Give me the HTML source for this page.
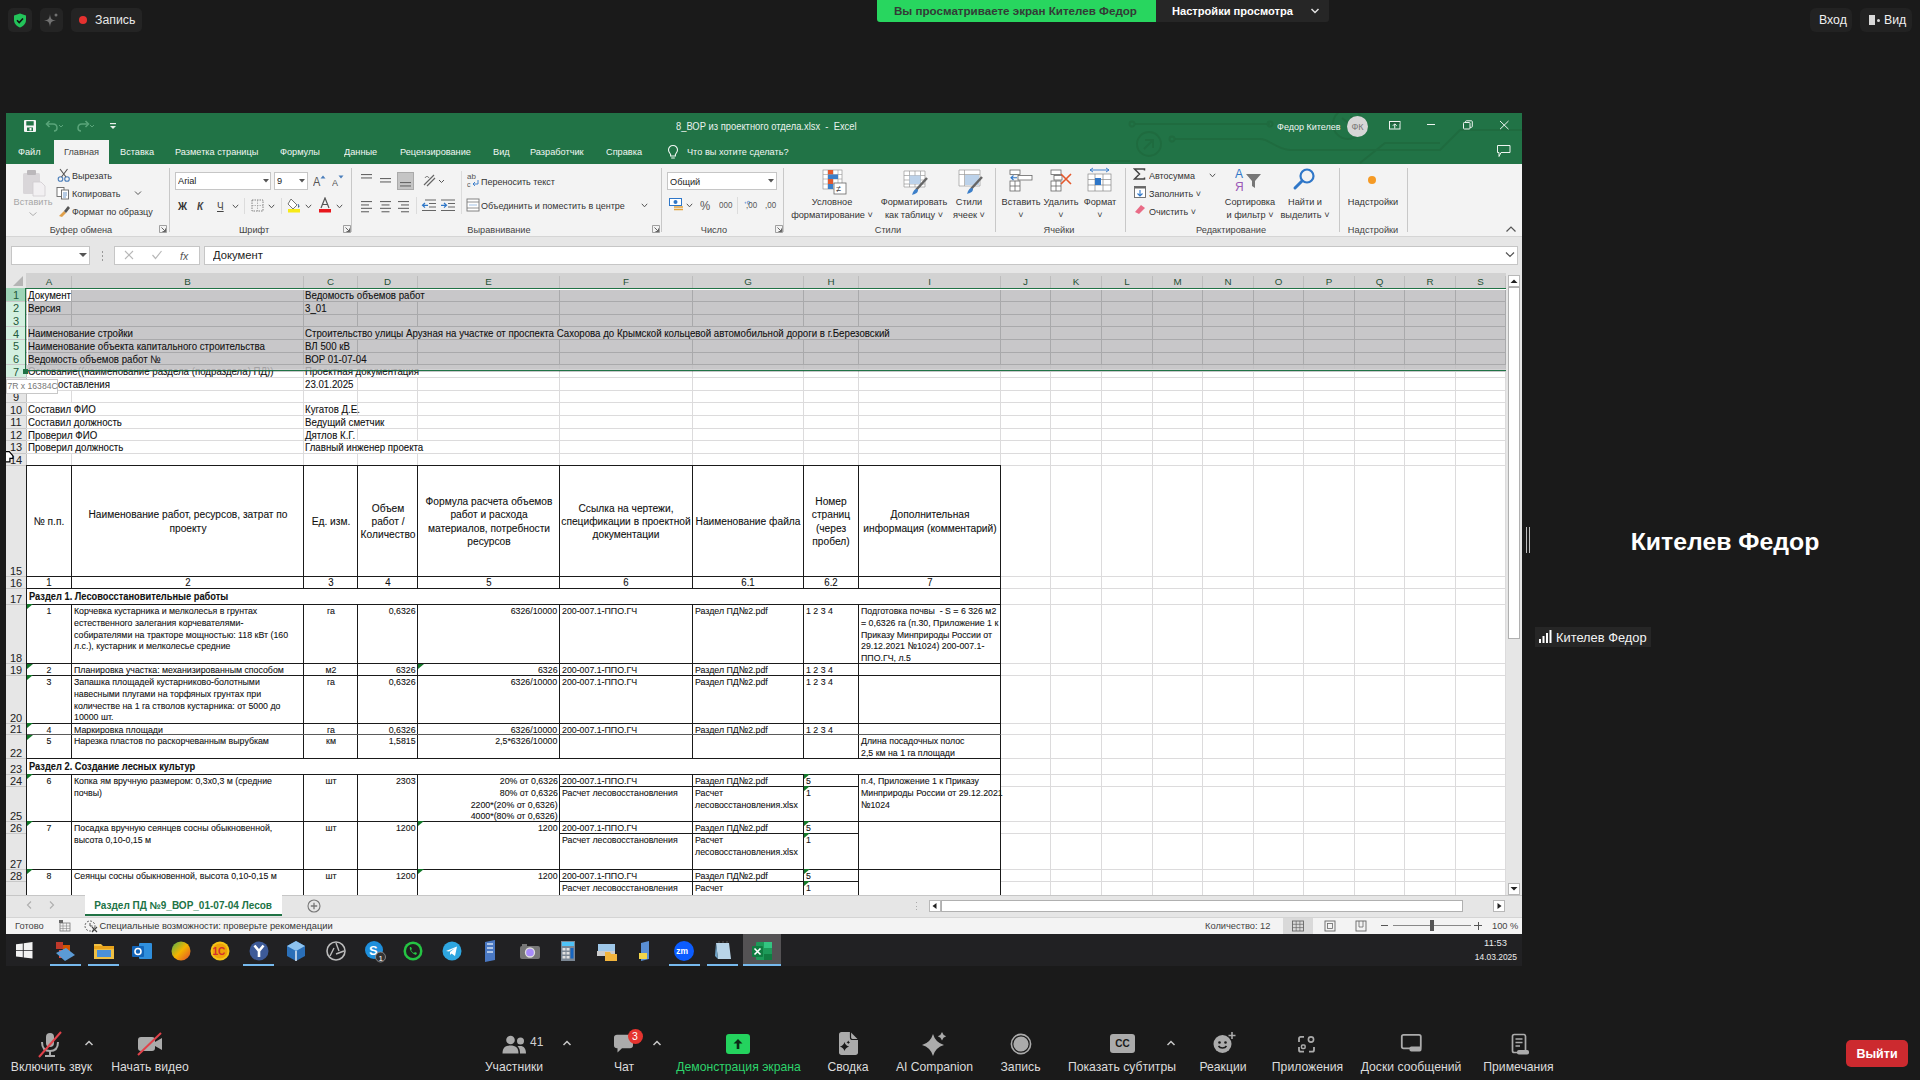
<!DOCTYPE html><html><head><meta charset="utf-8"><title>Zoom - Excel</title><style>
html,body{margin:0;padding:0;}
body{width:1920px;height:1080px;overflow:hidden;position:relative;background:#1a1a1a;font-family:"Liberation Sans",sans-serif;}
.a{position:absolute;}
.t{position:absolute;white-space:pre;font-family:"Liberation Sans",sans-serif;}
</style></head><body>
<div class="a" style="left:8.00px;top:8.00px;width:24.00px;height:24.00px;background:#242424;border-radius:5px;"></div>
<svg class="a" style="left:13px;top:13px;" width="14" height="15" viewBox="0 0 14 15"><path d="M7 0.5 L13 2.5 V7 C13 10.5 10.5 13 7 14.5 C3.5 13 1 10.5 1 7 V2.5 Z" fill="#23c45a"/><path d="M4 7.3 L6.2 9.5 L10 5.5" stroke="#111" stroke-width="1.6" fill="none"/></svg>
<div class="a" style="left:40.00px;top:8.00px;width:23.00px;height:24.00px;background:#242424;border-radius:5px;"></div>
<svg class="a" style="left:43px;top:12px;" width="16" height="16" viewBox="0 0 16 16"><path d="M7 2 C7.6 7 8.5 8 13 8.5 C8.5 9 7.6 10 7 15 C6.4 10 5.5 9 1 8.5 C5.5 8 6.4 7 7 2Z" fill="#707070"/><circle cx="13" cy="3" r="1.5" fill="#707070"/></svg>
<div class="a" style="left:71.00px;top:8.00px;width:71.00px;height:24.00px;background:#242424;border-radius:5px;"></div>
<div class="a" style="left:79.00px;top:16.00px;width:8.00px;height:8.00px;background:#e5312f;border-radius:50%;"></div>
<div class="t" style="top:12.50px;font-size:12.3px;line-height:15px;color:#e8e8e8;left:95.00px;">Запись</div>
<div class="a" style="left:877.00px;top:0.00px;width:280.00px;height:22.00px;background:#28d65f;border-radius:0 0 0 3px;"></div>
<div class="a" style="left:1156.00px;top:0.00px;width:173.00px;height:22.00px;background:#262626;border-radius:0 0 3px 0;"></div>
<div class="t" style="top:3.60px;font-size:11.6px;line-height:14px;color:#333b36;font-weight:bold;left:894.00px;">Вы просматриваете экран Кителев Федор</div>
<div class="t" style="top:4.00px;font-size:11.1px;line-height:14px;color:#ffffff;font-weight:bold;left:1172.00px;">Настройки просмотра</div>
<svg class="a" style="left:1310px;top:7px;" width="10" height="8" viewBox="0 0 10 8"><path d="M1.5 2 L5 5.5 L8.5 2" stroke="#e0e0e0" stroke-width="1.5" fill="none"/></svg>
<div class="a" style="left:1810.00px;top:8.00px;width:42.00px;height:24.00px;background:#222222;border-radius:6px;"></div>
<div class="t" style="top:12.50px;font-size:12.3px;line-height:15px;color:#f0f0f0;left:1819.00px;">Вход</div>
<div class="a" style="left:1860.00px;top:8.00px;width:52.00px;height:24.00px;background:#222222;border-radius:6px;"></div>
<div class="a" style="left:1869.00px;top:15.00px;width:6.00px;height:10.00px;background:#d8d8d8;"></div>
<div class="a" style="left:1877.00px;top:19.00px;width:3.00px;height:3.00px;background:#d8d8d8;border-radius:50%;"></div>
<div class="t" style="top:12.50px;font-size:12.3px;line-height:15px;color:#f0f0f0;left:1884.00px;">Вид</div>
<div class="a" style="left:1526.00px;top:527.00px;width:1.00px;height:26.00px;background:#bdbdbd;"></div>
<div class="a" style="left:1529.00px;top:527.00px;width:1.00px;height:26.00px;background:#bdbdbd;"></div>
<div class="t" style="top:525.50px;font-size:24.8px;line-height:31px;color:#ffffff;font-weight:bold;left:1525.00px;width:400px;text-align:center;">Кителев Федор</div>
<div class="a" style="left:1535.00px;top:627.00px;width:116.00px;height:20.00px;background:#262626;"></div>
<svg class="a" style="left:1538px;top:630px;" width="14" height="13" viewBox="0 0 14 13"><rect x="1" y="9" width="2" height="4" fill="#fff"/><rect x="4.5" y="6" width="2" height="7" fill="#fff"/><rect x="8" y="3" width="2" height="10" fill="#fff"/><rect x="11.5" y="0" width="2" height="13" fill="#fff"/></svg>
<div class="t" style="top:629.50px;font-size:12.85px;line-height:16px;color:#f4f4f4;left:1556.00px;">Кителев Федор</div>
<svg class="a" style="left:36px;top:1030px;" width="28" height="28" viewBox="0 0 28 28"><rect x="10" y="3" width="8" height="14" rx="4" fill="#ababab"/><path d="M6 12 C6 18 9 21 14 21 C19 21 22 18 22 12" stroke="#ababab" stroke-width="2" fill="none"/><rect x="13" y="21" width="2" height="4" fill="#ababab"/><rect x="9" y="25" width="10" height="2" fill="#ababab"/><path d="M3 27 L25 2" stroke="#e0424a" stroke-width="2"/></svg>
<svg class="a" style="left:84px;top:1039px;" width="10" height="8" viewBox="0 0 10 8"><path d="M1.5 6 L5 2.5 L8.5 6" stroke="#c8c8c8" stroke-width="1.5" fill="none"/></svg>
<div class="t" style="top:1059.80px;font-size:12.2px;line-height:15px;color:#dcdcdc;left:-48.50px;width:200px;text-align:center;">Включить звук</div>
<svg class="a" style="left:136px;top:1032px;" width="28" height="24" viewBox="0 0 28 24"><rect x="2" y="5" width="17" height="14" rx="3" fill="#ababab"/><path d="M19 10 L26 6 V18 L19 14 Z" fill="#ababab"/><path d="M2 23 L25 1" stroke="#e0424a" stroke-width="2"/></svg>
<div class="t" style="top:1059.80px;font-size:12.2px;line-height:15px;color:#dcdcdc;left:50.00px;width:200px;text-align:center;">Начать видео</div>
<svg class="a" style="left:502px;top:1035px;" width="26" height="19" viewBox="0 0 26 19"><circle cx="8.5" cy="5" r="4.3" fill="#ababab"/><path d="M0.5 18.5 C0.5 12.5 3.5 10.5 8.5 10.5 C13.5 10.5 16.5 12.5 16.5 18.5Z" fill="#ababab"/><circle cx="18.5" cy="6" r="3.5" fill="#ababab"/><path d="M15.5 11.3 C21 10 24 12.5 24 18.5 H18 C18 15.5 17.5 13 15.5 11.3Z" fill="#ababab"/></svg>
<div class="t" style="top:1034.50px;font-size:12px;line-height:15px;color:#d0d0d0;left:530.00px;">41</div>
<svg class="a" style="left:562px;top:1039px;" width="10" height="8" viewBox="0 0 10 8"><path d="M1.5 6 L5 2.5 L8.5 6" stroke="#c8c8c8" stroke-width="1.5" fill="none"/></svg>
<div class="t" style="top:1059.80px;font-size:12.2px;line-height:15px;color:#dcdcdc;left:414.00px;width:200px;text-align:center;">Участники</div>
<svg class="a" style="left:613px;top:1034px;" width="22" height="20" viewBox="0 0 22 20"><path d="M1 3.5 C1 1.8 2.3 0.8 4 0.8 H17 C18.7 0.8 20 1.8 20 3.5 V11.5 C20 13.2 18.7 14.2 17 14.2 H9 L4.5 18.5 V14.2 H4 C2.3 14.2 1 13.2 1 11.5Z" fill="#ababab"/></svg>
<div class="a" style="left:627.50px;top:1028.75px;width:15.00px;height:15.00px;background:#e5342f;border-radius:50%;"></div>
<div class="t" style="top:1029.50px;font-size:10.5px;line-height:13px;color:#ffffff;left:627.00px;width:16px;text-align:center;">3</div>
<svg class="a" style="left:652px;top:1039px;" width="10" height="8" viewBox="0 0 10 8"><path d="M1.5 6 L5 2.5 L8.5 6" stroke="#c8c8c8" stroke-width="1.5" fill="none"/></svg>
<div class="t" style="top:1059.80px;font-size:12.2px;line-height:15px;color:#dcdcdc;left:524.00px;width:200px;text-align:center;">Чат</div>
<div class="a" style="left:726.00px;top:1034.00px;width:24.00px;height:20.00px;background:#24d35e;border-radius:3px;"></div>
<svg class="a" style="left:732px;top:1037px;" width="12" height="14" viewBox="0 0 12 14"><path d="M6 2 L10.5 6.5 H7.3 V12 H4.7 V6.5 H1.5Z" fill="#0c2a16"/></svg>
<div class="t" style="top:1059.80px;font-size:12.2px;line-height:15px;color:#2dd36b;left:638.50px;width:200px;text-align:center;">Демонстрация экрана</div>
<svg class="a" style="left:838px;top:1031px;" width="21" height="25" viewBox="0 0 21 25"><path d="M1 3.5 C1 2 2 1 3.5 1 H12.5 L20 8.5 V21.5 C20 23 19 24 17.5 24 H3.5 C2 24 1 23 1 21.5Z" fill="#ababab"/><path d="M12.5 1 V6.5 C12.5 7.8 13.2 8.5 14.5 8.5 H20" stroke="#1a1a1a" stroke-width="1.2" fill="none"/><path d="M6.5 10.9 Q7.5120000000000005 14.488 11.1 15.5 Q7.5120000000000005 16.512 6.5 20.1 Q5.4879999999999995 16.512 1.9000000000000004 15.5 Q5.4879999999999995 14.488 6.5 10.9Z" fill="#1a1a1a"/><path d="M10.3 9.5 Q10.696000000000002 10.904 12.100000000000001 11.3 Q10.696000000000002 11.696000000000002 10.3 13.100000000000001 Q9.904 11.696000000000002 8.5 11.3 Q9.904 10.904 10.3 9.5Z" fill="#1a1a1a"/></svg>
<div class="t" style="top:1059.80px;font-size:12.2px;line-height:15px;color:#dcdcdc;left:748.00px;width:200px;text-align:center;">Сводка</div>
<svg class="a" style="left:919px;top:1030px;" width="28" height="28" viewBox="0 0 28 28"><path d="M14 4 Q16.42 12.58 25 15 Q16.42 17.42 14 26 Q11.58 17.42 3 15 Q11.58 12.58 14 4Z" fill="#ababab"/><path d="M23 2.0 Q23.924 5.276 27.2 6.2 Q23.924 7.1240000000000006 23 10.4 Q22.076 7.1240000000000006 18.8 6.2 Q22.076 5.276 23 2.0Z" fill="#ababab"/></svg>
<div class="t" style="top:1059.80px;font-size:12.2px;line-height:15px;color:#dcdcdc;left:834.50px;width:200px;text-align:center;">AI Companion</div>
<svg class="a" style="left:1010px;top:1033px;" width="22" height="22" viewBox="0 0 22 22"><circle cx="11" cy="11" r="9.6" fill="none" stroke="#ababab" stroke-width="1.6"/><circle cx="11" cy="11" r="7.6" fill="#ababab"/></svg>
<div class="t" style="top:1059.80px;font-size:12.2px;line-height:15px;color:#dcdcdc;left:920.50px;width:200px;text-align:center;">Запись</div>
<div class="a" style="left:1110.00px;top:1034.00px;width:25.00px;height:19.00px;background:#ababab;border-radius:3px;"></div>
<div class="t" style="top:1037.50px;font-size:10px;line-height:12px;color:#1a1a1a;font-weight:bold;left:1110.00px;width:25px;text-align:center;">CC</div>
<svg class="a" style="left:1166px;top:1039px;" width="10" height="8" viewBox="0 0 10 8"><path d="M1.5 6 L5 2.5 L8.5 6" stroke="#c8c8c8" stroke-width="1.5" fill="none"/></svg>
<div class="t" style="top:1059.80px;font-size:12.2px;line-height:15px;color:#dcdcdc;left:1022.00px;width:200px;text-align:center;">Показать субтитры</div>
<svg class="a" style="left:1212px;top:1031px;" width="25" height="23" viewBox="0 0 25 23"><circle cx="10.5" cy="13" r="9" fill="#ababab"/><circle cx="7.5" cy="11.5" r="1.3" fill="#1a1a1a"/><circle cx="13.5" cy="11.5" r="1.3" fill="#1a1a1a"/><path d="M6.5 15 C8 17.5 13 17.5 14.5 15" stroke="#1a1a1a" stroke-width="1.5" fill="none"/><path d="M20 1 V8 M16.5 4.5 H23.5" stroke="#ababab" stroke-width="1.6"/></svg>
<div class="t" style="top:1059.80px;font-size:12.2px;line-height:15px;color:#dcdcdc;left:1123.00px;width:200px;text-align:center;">Реакции</div>
<svg class="a" style="left:1297px;top:1035px;" width="20" height="19" viewBox="0 0 20 19"><path d="M2 7 V3.5 C2 2.5 2.7 1.8 3.7 1.8 H7 M2 12 V15 C2 16 2.7 16.7 3.7 16.7 H7 M17 12 V15 C17 16 16.3 16.7 15.3 16.7 H12" stroke="#ababab" stroke-width="1.8" fill="none"/><circle cx="14" cy="4.5" r="2.6" fill="none" stroke="#ababab" stroke-width="1.6"/><rect x="4.5" y="10" width="3.6" height="3.6" rx="1" fill="none" stroke="#ababab" stroke-width="1.5"/></svg>
<div class="t" style="top:1059.80px;font-size:12.2px;line-height:15px;color:#dcdcdc;left:1207.50px;width:200px;text-align:center;">Приложения</div>
<svg class="a" style="left:1400px;top:1033px;" width="23" height="20" viewBox="0 0 23 20"><rect x="1.8" y="1.8" width="19" height="13.5" rx="1.8" fill="none" stroke="#ababab" stroke-width="1.8"/><rect x="9.5" y="13.5" width="12" height="5" rx="1.8" fill="#ababab"/></svg>
<div class="t" style="top:1059.80px;font-size:12.2px;line-height:15px;color:#dcdcdc;left:1311.00px;width:200px;text-align:center;">Доски сообщений</div>
<svg class="a" style="left:1509px;top:1033px;" width="22" height="23" viewBox="0 0 22 23"><rect x="3.5" y="1.5" width="13" height="18" rx="1.8" fill="none" stroke="#ababab" stroke-width="1.7"/><path d="M6.5 6 H13.5 M6.5 9.5 H13.5 M6.5 13 H11" stroke="#ababab" stroke-width="1.5"/><rect x="8" y="17" width="12" height="4.5" rx="1.8" fill="#ababab"/></svg>
<div class="t" style="top:1059.80px;font-size:12.2px;line-height:15px;color:#dcdcdc;left:1418.50px;width:200px;text-align:center;">Примечания</div>
<div class="a" style="left:1846.00px;top:1040.00px;width:62.00px;height:27.00px;background:#cc2a2f;border-radius:5px;"></div>
<div class="t" style="top:1045.50px;font-size:12.5px;line-height:16px;color:#ffffff;font-weight:bold;left:1846.00px;width:62px;text-align:center;">Выйти</div>
<div class="a" style="left:6.00px;top:113.00px;width:1516.00px;height:51.00px;background:#217346;"></div>
<div class="a" style="left:6.00px;top:164.00px;width:1516.00px;height:72.00px;background:#f3f3f3;"></div>
<div class="a" style="left:6.00px;top:236.00px;width:1516.00px;height:37.00px;background:#e6e6e6;"></div>
<div class="a" style="left:6.00px;top:236.00px;width:1516.00px;height:1.00px;background:#d5d5d5;"></div>
<svg class="a" style="left:1110px;top:113px;" width="412" height="51" viewBox="0 0 412 51"><g stroke="#1f6a3e" stroke-width="1.8" fill="none" opacity="0.85"><path d="M24 11 H160"/><circle cx="22" cy="11" r="2.5"/><circle cx="160" cy="11" r="2.5"/><path d="M64 26 H150 C160 26 165 36 180 37 H330 L350 17 H412"/><circle cx="62" cy="26" r="2.5"/><circle cx="39" cy="31" r="12"/><path d="M34 36 L43 27 M35 27 H43 V35"/><circle cx="238" cy="11" r="15"/><path d="M232 5 L246 16 M240 4 H246 V10"/><path d="M250 50 L275 30 H330"/><path d="M0 48 H20"/></g></svg>
<svg class="a" style="left:23px;top:119px;" width="14" height="14" viewBox="0 0 14 14"><rect x="1" y="1" width="12" height="12" rx="1" fill="#f4f4f4"/><rect x="3.3" y="2.2" width="7.4" height="4.3" fill="#217346"/><rect x="4" y="8.5" width="6" height="3.5" fill="#217346"/><rect x="6.5" y="9" width="2" height="2.5" fill="#f4f4f4"/></svg>
<svg class="a" style="left:44px;top:119px;" width="20" height="14" viewBox="0 0 20 14"><path d="M3 5 H9 C12 5 13 7 13 9 C13 11 12 12 10 12" stroke="#5aa57a" stroke-width="1.5" fill="none"/><path d="M5.5 2 L2.5 5 L5.5 8" stroke="#5aa57a" stroke-width="1.5" fill="none"/><path d="M15 6 L17 8 L19 6" stroke="#5aa57a" stroke-width="1" fill="none"/></svg>
<svg class="a" style="left:75px;top:119px;" width="20" height="14" viewBox="0 0 20 14"><path d="M13 5 H7 C4 5 3 7 3 9 C3 11 4 12 6 12" stroke="#5aa57a" stroke-width="1.5" fill="none"/><path d="M10.5 2 L13.5 5 L10.5 8" stroke="#5aa57a" stroke-width="1.5" fill="none"/><path d="M15 6 L17 8 L19 6" stroke="#5aa57a" stroke-width="1" fill="none"/></svg>
<svg class="a" style="left:108px;top:121px;" width="10" height="10" viewBox="0 0 10 10"><rect x="2" y="2" width="6" height="1.2" fill="#e8f0ea"/><path d="M2 5 H8 L5 8Z" fill="#e8f0ea"/></svg>
<div class="t" style="top:120.00px;font-size:10.15px;line-height:13px;color:#e9f1ec;transform:scaleX(0.9259);transform-origin:left center;left:676.00px;">8_ВОР из проектного отдела.xlsx  -  Excel</div>
<div class="t" style="top:120.50px;font-size:9.72px;line-height:12px;color:#f0f5f2;transform:scaleX(0.9259);transform-origin:right center;right:579.00px;">Федор Кителев</div>
<div class="a" style="left:1347.00px;top:116.00px;width:21.00px;height:21.00px;background:#d6d6d6;border-radius:50%;"></div>
<div class="t" style="top:120.50px;font-size:9.72px;line-height:12px;color:#777777;transform:scaleX(0.9259);transform-origin:center center;left:1347.00px;width:21px;text-align:center;">ФК</div>
<svg class="a" style="left:1388px;top:120px;" width="14" height="10" viewBox="0 0 14 10"><rect x="1.5" y="1.5" width="10.5" height="7.5" fill="none" stroke="#eef4f0" stroke-width="1"/><rect x="2" y="2" width="9.5" height="2" fill="#1d5e3a"/><path d="M6.75 8.5 V4 M4.8 5.8 L6.75 3.8 L8.7 5.8" stroke="#eef4f0" stroke-width="1" fill="none"/></svg>
<div class="a" style="left:1427.00px;top:124.00px;width:8.00px;height:1.00px;background:#eef4f0;"></div>
<svg class="a" style="left:1462px;top:120px;" width="12" height="10" viewBox="0 0 12 10"><rect x="1.5" y="2.5" width="6.5" height="6.5" rx="0.8" fill="none" stroke="#eef4f0" stroke-width="1"/><path d="M3.5 2.5 V1.5 C3.5 1 4 0.8 4.5 0.8 H9.5 C10 0.8 10.3 1.2 10.3 1.6 V6.5 C10.3 7 10 7.3 9.5 7.3 H8" stroke="#eef4f0" stroke-width="1" fill="none"/></svg>
<svg class="a" style="left:1499px;top:120px;" width="11" height="10" viewBox="0 0 11 10"><path d="M1 1 L9.5 9.2 M9.5 1 L1 9.2" stroke="#eef4f0" stroke-width="1"/></svg>
<svg class="a" style="left:1496px;top:144px;" width="16" height="15" viewBox="0 0 16 15"><path d="M1.5 1.5 H14 V8.5 H5 L3 12.5 V8.5 H1.5Z" fill="none" stroke="#eef4f0" stroke-width="1"/></svg>
<div class="a" style="left:54.00px;top:140.00px;width:55.00px;height:24.00px;background:#f3f3f3;"></div>
<div class="t" style="top:145.80px;font-size:9.94px;line-height:12px;color:#f2f7f4;transform:scaleX(0.9259);transform-origin:left center;left:17.80px;">Файл</div>
<div class="t" style="top:145.80px;font-size:9.94px;line-height:12px;color:#444444;transform:scaleX(0.9259);transform-origin:left center;left:63.80px;">Главная</div>
<div class="t" style="top:145.80px;font-size:9.94px;line-height:12px;color:#f2f7f4;transform:scaleX(0.9259);transform-origin:left center;left:120.00px;">Вставка</div>
<div class="t" style="top:145.80px;font-size:9.94px;line-height:12px;color:#f2f7f4;transform:scaleX(0.9259);transform-origin:left center;left:174.50px;">Разметка страницы</div>
<div class="t" style="top:145.80px;font-size:9.94px;line-height:12px;color:#f2f7f4;transform:scaleX(0.9259);transform-origin:left center;left:280.00px;">Формулы</div>
<div class="t" style="top:145.80px;font-size:9.94px;line-height:12px;color:#f2f7f4;transform:scaleX(0.9259);transform-origin:left center;left:344.00px;">Данные</div>
<div class="t" style="top:145.80px;font-size:9.94px;line-height:12px;color:#f2f7f4;transform:scaleX(0.9259);transform-origin:left center;left:399.50px;">Рецензирование</div>
<div class="t" style="top:145.80px;font-size:9.94px;line-height:12px;color:#f2f7f4;transform:scaleX(0.9259);transform-origin:left center;left:492.50px;">Вид</div>
<div class="t" style="top:145.80px;font-size:9.94px;line-height:12px;color:#f2f7f4;transform:scaleX(0.9259);transform-origin:left center;left:529.50px;">Разработчик</div>
<div class="t" style="top:145.80px;font-size:9.94px;line-height:12px;color:#f2f7f4;transform:scaleX(0.9259);transform-origin:left center;left:606.00px;">Справка</div>
<svg class="a" style="left:667px;top:144px;" width="12" height="16" viewBox="0 0 12 16"><path d="M6 1.5 C3.2 1.5 1.5 3.5 1.5 6 C1.5 8 3 9 3.6 10.5 V12 H8.4 V10.5 C9 9 10.5 8 10.5 6 C10.5 3.5 8.8 1.5 6 1.5Z M4.2 14 H7.8" stroke="#f2f7f4" stroke-width="1.1" fill="none"/></svg>
<div class="t" style="top:145.80px;font-size:9.94px;line-height:12px;color:#f2f7f4;transform:scaleX(0.9259);transform-origin:left center;left:687.00px;">Что вы хотите сделать?</div>
<div class="a" style="left:168.80px;top:168.00px;width:1.00px;height:64.00px;background:#c8c8c8;"></div>
<div class="a" style="left:351.40px;top:168.00px;width:1.00px;height:64.00px;background:#c8c8c8;"></div>
<div class="a" style="left:660.50px;top:168.00px;width:1.00px;height:64.00px;background:#c8c8c8;"></div>
<div class="a" style="left:783.40px;top:168.00px;width:1.00px;height:64.00px;background:#c8c8c8;"></div>
<div class="a" style="left:994.50px;top:168.00px;width:1.00px;height:64.00px;background:#c8c8c8;"></div>
<div class="a" style="left:1125.40px;top:168.00px;width:1.00px;height:64.00px;background:#c8c8c8;"></div>
<div class="a" style="left:1338.60px;top:168.00px;width:1.00px;height:64.00px;background:#c8c8c8;"></div>
<div class="a" style="left:1406.50px;top:168.00px;width:1.00px;height:64.00px;background:#c8c8c8;"></div>
<div class="t" style="top:224.00px;font-size:9.94px;line-height:12px;color:#444444;transform:scaleX(0.9259);transform-origin:center center;left:0.75px;width:160px;text-align:center;">Буфер обмена</div>
<div class="t" style="top:224.00px;font-size:9.94px;line-height:12px;color:#444444;transform:scaleX(0.9259);transform-origin:center center;left:174.00px;width:160px;text-align:center;">Шрифт</div>
<div class="t" style="top:224.00px;font-size:9.94px;line-height:12px;color:#444444;transform:scaleX(0.9259);transform-origin:center center;left:419.00px;width:160px;text-align:center;">Выравнивание</div>
<div class="t" style="top:224.00px;font-size:9.94px;line-height:12px;color:#444444;transform:scaleX(0.9259);transform-origin:center center;left:634.00px;width:160px;text-align:center;">Число</div>
<div class="t" style="top:224.00px;font-size:9.94px;line-height:12px;color:#444444;transform:scaleX(0.9259);transform-origin:center center;left:808.00px;width:160px;text-align:center;">Стили</div>
<div class="t" style="top:224.00px;font-size:9.94px;line-height:12px;color:#444444;transform:scaleX(0.9259);transform-origin:center center;left:979.00px;width:160px;text-align:center;">Ячейки</div>
<div class="t" style="top:224.00px;font-size:9.94px;line-height:12px;color:#444444;transform:scaleX(0.9259);transform-origin:center center;left:1151.00px;width:160px;text-align:center;">Редактирование</div>
<div class="t" style="top:224.00px;font-size:9.94px;line-height:12px;color:#444444;transform:scaleX(0.9259);transform-origin:center center;left:1292.50px;width:160px;text-align:center;">Надстройки</div>
<svg class="a" style="left:159px;top:225px;" width="8" height="8" viewBox="0 0 8 8"><path d="M0.5 0.5 H7.5 V7.5 H0.5Z" fill="none" stroke="#8a8a8a" stroke-width="0.8"/><path d="M2.5 2.5 L6.5 6.5 M6.5 3.5 V6.5 H3.5" stroke="#555" stroke-width="0.9" fill="none"/></svg>
<svg class="a" style="left:343px;top:225px;" width="8" height="8" viewBox="0 0 8 8"><path d="M0.5 0.5 H7.5 V7.5 H0.5Z" fill="none" stroke="#8a8a8a" stroke-width="0.8"/><path d="M2.5 2.5 L6.5 6.5 M6.5 3.5 V6.5 H3.5" stroke="#555" stroke-width="0.9" fill="none"/></svg>
<svg class="a" style="left:651.5px;top:225px;" width="8" height="8" viewBox="0 0 8 8"><path d="M0.5 0.5 H7.5 V7.5 H0.5Z" fill="none" stroke="#8a8a8a" stroke-width="0.8"/><path d="M2.5 2.5 L6.5 6.5 M6.5 3.5 V6.5 H3.5" stroke="#555" stroke-width="0.9" fill="none"/></svg>
<svg class="a" style="left:775px;top:225px;" width="8" height="8" viewBox="0 0 8 8"><path d="M0.5 0.5 H7.5 V7.5 H0.5Z" fill="none" stroke="#8a8a8a" stroke-width="0.8"/><path d="M2.5 2.5 L6.5 6.5 M6.5 3.5 V6.5 H3.5" stroke="#555" stroke-width="0.9" fill="none"/></svg>
<svg class="a" style="left:1505px;top:225px;" width="12" height="8" viewBox="0 0 12 8"><path d="M1.5 6.5 L6 2 L10.5 6.5" stroke="#555" stroke-width="1.2" fill="none"/></svg>
<svg class="a" style="left:21px;top:168px;" width="26" height="30" viewBox="0 0 26 30"><rect x="2" y="5" width="17" height="21" rx="1.5" fill="#d9d6d9"/><rect x="6" y="2" width="9" height="5" rx="1" fill="#bbb8bb"/><path d="M12 14 H20 L24 18 V28 H12Z" fill="#f2f0f2" stroke="#cfcccf" stroke-width="0.8"/></svg>
<div class="t" style="top:195.50px;font-size:9.94px;line-height:12px;color:#a6a6a6;transform:scaleX(0.9259);transform-origin:center center;left:2.50px;width:60px;text-align:center;">Вставить</div>
<svg class="a" style="left:28px;top:211px;" width="10" height="6" viewBox="0 0 10 6"><path d="M1.5 1.5 L5 4.5 L8.5 1.5" stroke="#b0b0b0" stroke-width="1" fill="none"/></svg>
<svg class="a" style="left:57px;top:168px;" width="14" height="14" viewBox="0 0 14 14"><circle cx="3.5" cy="11" r="2.3" fill="none" stroke="#4a7ebb" stroke-width="1.1"/><circle cx="10" cy="11" r="2.3" fill="none" stroke="#4a7ebb" stroke-width="1.1"/><path d="M4.5 9 L10.5 1 M9 9 L3 1" stroke="#555" stroke-width="1.1"/></svg>
<div class="t" style="top:169.50px;font-size:9.72px;line-height:12px;color:#333333;transform:scaleX(0.9259);transform-origin:left center;left:72.00px;">Вырезать</div>
<svg class="a" style="left:56px;top:186px;" width="14" height="14" viewBox="0 0 14 14"><rect x="1" y="1.5" width="7" height="9" fill="#fff" stroke="#666" stroke-width="0.9"/><rect x="5.5" y="4" width="7" height="9" fill="#fff" stroke="#666" stroke-width="0.9"/><path d="M7 7 H11 M7 9 H11 M7 11 H10" stroke="#4a7ebb" stroke-width="0.8"/></svg>
<div class="t" style="top:187.80px;font-size:9.72px;line-height:12px;color:#333333;transform:scaleX(0.9259);transform-origin:left center;left:72.00px;">Копировать</div>
<svg class="a" style="left:134px;top:190px;" width="8" height="6" viewBox="0 0 8 6"><path d="M1 1.5 L4 4.5 L7 1.5" stroke="#555" stroke-width="1" fill="none"/></svg>
<svg class="a" style="left:57px;top:203px;" width="15" height="15" viewBox="0 0 15 15"><path d="M2 13 L7 8 L9 10 L5 14Z" fill="#e0a04a"/><path d="M7 8 L11 3 L13 5 L9 10Z" fill="#555"/></svg>
<div class="t" style="top:205.60px;font-size:9.72px;line-height:12px;color:#333333;transform:scaleX(0.9259);transform-origin:left center;left:72.00px;">Формат по образцу</div>
<div class="a" style="left:175.40px;top:172.00px;width:96.00px;height:18.00px;background:#ffffff;box-sizing:border-box;border:1px solid #c6c6c6;"></div>
<div class="t" style="top:175.00px;font-size:9.94px;line-height:12px;color:#222;transform:scaleX(0.9259);transform-origin:left center;left:178.00px;">Arial</div>
<svg class="a" style="left:262px;top:178px;" width="8" height="6" viewBox="0 0 8 6"><path d="M1 1 H7 L4 4.5Z" fill="#555"/></svg>
<div class="a" style="left:274.30px;top:172.00px;width:33.40px;height:18.00px;background:#ffffff;box-sizing:border-box;border:1px solid #c6c6c6;"></div>
<div class="t" style="top:175.00px;font-size:9.94px;line-height:12px;color:#222;transform:scaleX(0.9259);transform-origin:left center;left:277.00px;">9</div>
<svg class="a" style="left:298px;top:178px;" width="8" height="6" viewBox="0 0 8 6"><path d="M1 1 H7 L4 4.5Z" fill="#555"/></svg>
<div class="t" style="top:174.50px;font-size:11.88px;line-height:15px;color:#555;transform:scaleX(0.9259);transform-origin:left center;left:313.00px;">A</div>
<svg class="a" style="left:320px;top:175px;" width="6" height="4" viewBox="0 0 6 4"><path d="M0.5 3.5 L3 0.5 L5.5 3.5Z" fill="#4a7ebb"/></svg>
<div class="t" style="top:177.00px;font-size:9.72px;line-height:12px;color:#555;transform:scaleX(0.9259);transform-origin:left center;left:332.00px;">A</div>
<svg class="a" style="left:338px;top:175px;" width="6" height="4" viewBox="0 0 6 4"><path d="M0.5 0.5 L3 3.5 L5.5 0.5Z" fill="#4a7ebb"/></svg>
<div class="t" style="top:198.50px;font-size:10.8px;line-height:14px;color:#333;transform:scaleX(0.9259);transform-origin:left center;font-weight:bold;left:178.00px;">Ж</div>
<div class="t" style="top:198.50px;font-size:10.8px;line-height:14px;color:#444;transform:scaleX(0.9259);transform-origin:left center;font-weight:bold;left:197.00px;font-style:italic;">К</div>
<div class="t" style="top:198.50px;font-size:10.8px;line-height:14px;color:#444;transform:scaleX(0.9259);transform-origin:left center;left:217.00px;text-decoration:underline;">Ч</div>
<svg class="a" style="left:232px;top:204px;" width="7" height="5" viewBox="0 0 7 5"><path d="M0.8 0.8 L3.5 3.8 L6.2 0.8" stroke="#555" stroke-width="1" fill="none"/></svg>
<svg class="a" style="left:268px;top:204px;" width="7" height="5" viewBox="0 0 7 5"><path d="M0.8 0.8 L3.5 3.8 L6.2 0.8" stroke="#555" stroke-width="1" fill="none"/></svg>
<svg class="a" style="left:305px;top:204px;" width="7" height="5" viewBox="0 0 7 5"><path d="M0.8 0.8 L3.5 3.8 L6.2 0.8" stroke="#555" stroke-width="1" fill="none"/></svg>
<svg class="a" style="left:335.5px;top:204px;" width="7" height="5" viewBox="0 0 7 5"><path d="M0.8 0.8 L3.5 3.8 L6.2 0.8" stroke="#555" stroke-width="1" fill="none"/></svg>
<svg class="a" style="left:251px;top:199px;" width="13" height="13" viewBox="0 0 13 13"><rect x="1" y="1" width="11" height="11" fill="none" stroke="#777" stroke-width="0.9" stroke-dasharray="1.5 1"/><path d="M6.5 1 V12 M1 6.5 H12" stroke="#999" stroke-width="0.7" stroke-dasharray="1.5 1"/></svg>
<div class="a" style="left:244.00px;top:198.00px;width:1.00px;height:16.00px;background:#dcdcdc;"></div>
<div class="a" style="left:281.00px;top:198.00px;width:1.00px;height:16.00px;background:#dcdcdc;"></div>
<svg class="a" style="left:287px;top:197px;" width="14" height="16" viewBox="0 0 14 16"><path d="M4 2 L10 8 L6 12 L1 7Z" fill="#fff" stroke="#666" stroke-width="0.9"/><path d="M11 7 C12 9 12.5 10 11.5 10.5" stroke="#4a7ebb" stroke-width="1"/><rect x="1" y="12" width="12" height="3.5" fill="#f7ea17"/></svg>
<svg class="a" style="left:318px;top:197px;" width="14" height="16" viewBox="0 0 14 16"><path d="M3 11 L7 1 L11 11 M4.5 7.5 H9.5" stroke="#555" stroke-width="1.2" fill="none"/><rect x="1" y="12" width="12" height="3.5" fill="#e8171d"/></svg>
<svg class="a" style="left:361px;top:174px;" width="16" height="12" viewBox="0 0 16 12"><rect x="0" y="0.0" width="11" height="1.1" fill="#666"/><rect x="0" y="3.4" width="11" height="1.1" fill="#666"/></svg>
<svg class="a" style="left:380px;top:177.5px;" width="16" height="12" viewBox="0 0 16 12"><rect x="0" y="0.0" width="11" height="1.1" fill="#666"/><rect x="0" y="3.4" width="11" height="1.1" fill="#666"/></svg>
<div class="a" style="left:396.50px;top:172.00px;width:17.00px;height:18.00px;background:#c5c5c5;box-sizing:border-box;border:1px solid #aaa;"></div>
<svg class="a" style="left:399.5px;top:182px;" width="16" height="12" viewBox="0 0 16 12"><rect x="0" y="0.0" width="11" height="1.1" fill="#666"/><rect x="0" y="3.4" width="11" height="1.1" fill="#666"/></svg>
<svg class="a" style="left:422px;top:173px;" width="22" height="16" viewBox="0 0 22 16"><path d="M2 12 L12 2 M5 13 L13 5" stroke="#666" stroke-width="1.2"/><path d="M3 5 C4 3 6 3 7 5" stroke="#666" fill="none"/><path d="M17 7 L19.5 9.5 L22 7" stroke="#555" stroke-width="1" fill="none"/></svg>
<svg class="a" style="left:361px;top:201px;" width="16" height="12" viewBox="0 0 16 12"><rect x="0" y="0.0" width="11" height="1.1" fill="#666"/><rect x="0" y="3.4" width="8" height="1.1" fill="#666"/><rect x="0" y="6.8" width="11" height="1.1" fill="#666"/><rect x="0" y="10.2" width="8" height="1.1" fill="#666"/></svg>
<svg class="a" style="left:379.5px;top:201px;" width="16" height="12" viewBox="0 0 16 12"><rect x="0" y="0.0" width="11" height="1.1" fill="#666"/><rect x="1.5" y="3.4" width="8" height="1.1" fill="#666"/><rect x="0" y="6.8" width="11" height="1.1" fill="#666"/><rect x="1.5" y="10.2" width="8" height="1.1" fill="#666"/></svg>
<svg class="a" style="left:398px;top:201px;" width="16" height="12" viewBox="0 0 16 12"><rect x="0" y="0.0" width="11" height="1.1" fill="#666"/><rect x="3" y="3.4" width="8" height="1.1" fill="#666"/><rect x="0" y="6.8" width="11" height="1.1" fill="#666"/><rect x="3" y="10.2" width="8" height="1.1" fill="#666"/></svg>
<div class="a" style="left:416.00px;top:197.00px;width:1.00px;height:17.00px;background:#dcdcdc;"></div>
<svg class="a" style="left:421px;top:199px;" width="16" height="13" viewBox="0 0 16 13"><path d="M4 1 H15 M8 4.5 H15 M8 8 H15 M1 11.5 H15" stroke="#666" stroke-width="1.1"/><path d="M7 6.3 H1.5 M4 4 L1.5 6.3 L4 8.6" stroke="#2f77c8" stroke-width="1.2" fill="none"/></svg>
<svg class="a" style="left:440px;top:199px;" width="16" height="13" viewBox="0 0 16 13"><path d="M1 1 H15 M8 4.5 H15 M8 8 H15 M1 11.5 H15" stroke="#666" stroke-width="1.1"/><path d="M1 6.3 H6.5 M4 4 L6.5 6.3 L4 8.6" stroke="#2f77c8" stroke-width="1.2" fill="none"/></svg>
<div class="a" style="left:460.50px;top:171.00px;width:1.00px;height:43.00px;background:#dcdcdc;"></div>
<svg class="a" style="left:467px;top:171px;" width="14" height="18" viewBox="0 0 14 18"><text x="0" y="8" font-size="8" font-family="Liberation Sans" fill="#555">ab</text><text x="0" y="16" font-size="7" font-family="Liberation Sans" fill="#555">c</text><path d="M6 13 H11 V9 M8 11 L6 13 L8 15" stroke="#2f77c8" stroke-width="0.9" fill="none"/></svg>
<div class="t" style="top:175.50px;font-size:9.72px;line-height:12px;color:#333;transform:scaleX(0.9259);transform-origin:left center;left:481.00px;">Переносить текст</div>
<svg class="a" style="left:466px;top:198px;" width="14" height="14" viewBox="0 0 14 14"><rect x="1" y="1" width="12" height="12" fill="#fff" stroke="#777" stroke-width="0.9"/><path d="M1 4 H13 M1 10 H13" stroke="#777" stroke-width="0.8"/><path d="M3.5 7 H10.5" stroke="#2f77c8" stroke-width="0.9" stroke-dasharray="1 1"/></svg>
<div class="t" style="top:199.50px;font-size:9.72px;line-height:12px;color:#333;transform:scaleX(0.9259);transform-origin:left center;left:481.00px;">Объединить и поместить в центре</div>
<svg class="a" style="left:641px;top:203px;" width="7" height="5" viewBox="0 0 7 5"><path d="M0.8 0.8 L3.5 3.8 L6.2 0.8" stroke="#555" stroke-width="1" fill="none"/></svg>
<div class="a" style="left:667.00px;top:172.00px;width:110.00px;height:18.00px;background:#ffffff;box-sizing:border-box;border:1px solid #c6c6c6;"></div>
<div class="t" style="top:175.50px;font-size:9.94px;line-height:12px;color:#222;transform:scaleX(0.9259);transform-origin:left center;left:670.00px;">Общий</div>
<svg class="a" style="left:767px;top:178px;" width="8" height="6" viewBox="0 0 8 6"><path d="M1 1 H7 L4 4.5Z" fill="#555"/></svg>
<svg class="a" style="left:669px;top:198px;" width="20" height="14" viewBox="0 0 20 14"><rect x="0.5" y="0.5" width="12" height="7" fill="#fff" stroke="#2f77c8"/><circle cx="6.5" cy="4" r="2" fill="#2f77c8"/><path d="M5 9 H14 M5 11.5 H14" stroke="#e3a23b" stroke-width="1.5"/></svg>
<svg class="a" style="left:686px;top:203px;" width="7" height="5" viewBox="0 0 7 5"><path d="M0.8 0.8 L3.5 3.8 L6.2 0.8" stroke="#555" stroke-width="1" fill="none"/></svg>
<div class="t" style="top:198.00px;font-size:12.42px;line-height:16px;color:#555;transform:scaleX(0.9259);transform-origin:left center;left:700.00px;">%</div>
<div class="t" style="top:200.00px;font-size:8.64px;line-height:11px;color:#555;transform:scaleX(0.9259);transform-origin:left center;left:719.00px;">000</div>
<div class="a" style="left:737.00px;top:197.00px;width:1.00px;height:17.00px;background:#dcdcdc;"></div>
<div class="t" style="top:200.00px;font-size:8.64px;line-height:11px;color:#2f77c8;transform:scaleX(0.9259);transform-origin:left center;left:744.00px;">⁺⁰</div>
<div class="t" style="top:200.00px;font-size:8.64px;line-height:11px;color:#555;transform:scaleX(0.9259);transform-origin:left center;left:746.00px;">,00</div>
<div class="t" style="top:200.00px;font-size:8.64px;line-height:11px;color:#555;transform:scaleX(0.9259);transform-origin:left center;left:765.00px;">,00</div>
<svg class="a" style="left:822px;top:169px;" width="26" height="26" viewBox="0 0 26 26"><g fill="#fff" stroke="#888" stroke-width="0.6"><rect x="1" y="1" width="19" height="19"/></g><path d="M1 5.5 H20 M1 10 H20 M1 15 H20 M6 1 V20 M11 1 V20 M16 1 V20" stroke="#999" stroke-width="0.6"/><rect x="6" y="1" width="5" height="4.5" fill="#e4582c"/><rect x="6" y="5.5" width="10" height="4.5" fill="#3c7fc9"/><rect x="6" y="10" width="5" height="5" fill="#e4582c"/><rect x="6" y="15" width="5" height="5" fill="#3c7fc9"/><rect x="12" y="14" width="12" height="11" fill="#fff" stroke="#666" stroke-width="0.8"/><text x="14.3" y="23" font-size="9" font-family="Liberation Sans" fill="#444">≠</text></svg>
<div class="t" style="top:195.50px;font-size:9.94px;line-height:12px;color:#333;transform:scaleX(0.9259);transform-origin:center center;left:782.00px;width:100px;text-align:center;">Условное</div>
<div class="t" style="top:208.50px;font-size:9.94px;line-height:12px;color:#333;transform:scaleX(0.9259);transform-origin:center center;left:772.00px;width:120px;text-align:center;">форматирование ˅</div>
<svg class="a" style="left:903px;top:170px;" width="26" height="26" viewBox="0 0 26 26"><path d="M1 1 H22 V17 H1Z M1 5.5 H22 M1 10 H22 M1 14 H22 M6.5 1 V17 M12 1 V17 M17.5 1 V17" stroke="#999" stroke-width="0.7" fill="#fff"/><rect x="6.5" y="5.5" width="11" height="8.5" fill="#bcd2ea"/><path d="M24 8 L13 20" stroke="#666" stroke-width="2.5"/><path d="M14 19 C11 19 10 22 9 25 C12 24 15 23 15 20Z" fill="#3c7fc9"/></svg>
<div class="t" style="top:195.50px;font-size:9.94px;line-height:12px;color:#333;transform:scaleX(0.9259);transform-origin:center center;left:864.00px;width:100px;text-align:center;">Форматировать</div>
<div class="t" style="top:208.50px;font-size:9.94px;line-height:12px;color:#333;transform:scaleX(0.9259);transform-origin:center center;left:864.00px;width:100px;text-align:center;">как таблицу ˅</div>
<svg class="a" style="left:958px;top:169px;" width="26" height="26" viewBox="0 0 26 26"><path d="M1 1 H22 V17 H1Z M1 5.5 H22 M6.5 1 V17" stroke="#999" stroke-width="0.7" fill="#fff"/><rect x="7" y="6" width="14" height="10" fill="#bcd2ea"/><path d="M24 8 L13 20" stroke="#666" stroke-width="2.5"/><path d="M14 19 C11 19 10 22 9 25 C12 24 15 23 15 20Z" fill="#3c7fc9"/></svg>
<div class="t" style="top:195.50px;font-size:9.94px;line-height:12px;color:#333;transform:scaleX(0.9259);transform-origin:center center;left:939.00px;width:60px;text-align:center;">Стили</div>
<div class="t" style="top:208.50px;font-size:9.94px;line-height:12px;color:#333;transform:scaleX(0.9259);transform-origin:center center;left:939.00px;width:60px;text-align:center;">ячеек ˅</div>
<svg class="a" style="left:1008px;top:169px;" width="26" height="24" viewBox="0 0 26 24"><g fill="#fff" stroke="#666" stroke-width="0.8"><rect x="2" y="1" width="10" height="4.5"/><rect x="10" y="6.5" width="14" height="4.5"/><rect x="2" y="12" width="10" height="10"/><path d="M2 17 H12 M7 12 V22"/></g><path d="M9 8.7 H3 M5.5 6.5 L3 8.7 L5.5 11" stroke="#2f77c8" stroke-width="1.1" fill="none"/></svg>
<div class="t" style="top:195.50px;font-size:9.94px;line-height:12px;color:#333;transform:scaleX(0.9259);transform-origin:center center;left:991.00px;width:60px;text-align:center;">Вставить</div>
<div class="t" style="top:208.50px;font-size:9.72px;line-height:12px;color:#333;transform:scaleX(0.9259);transform-origin:center center;left:1011.00px;width:20px;text-align:center;">˅</div>
<svg class="a" style="left:1049px;top:169px;" width="26" height="24" viewBox="0 0 26 24"><g fill="#fff" stroke="#666" stroke-width="0.8"><rect x="2" y="1" width="10" height="4.5"/><rect x="5" y="6.5" width="8" height="4.5"/><rect x="2" y="12" width="10" height="10"/><path d="M2 17 H12 M7 12 V22"/></g><path d="M12 5 L22 15 M22 5 L12 15" stroke="#e4582c" stroke-width="1.6"/></svg>
<div class="t" style="top:195.50px;font-size:9.94px;line-height:12px;color:#333;transform:scaleX(0.9259);transform-origin:center center;left:1031.00px;width:60px;text-align:center;">Удалить</div>
<div class="t" style="top:208.50px;font-size:9.72px;line-height:12px;color:#333;transform:scaleX(0.9259);transform-origin:center center;left:1051.00px;width:20px;text-align:center;">˅</div>
<svg class="a" style="left:1087px;top:167px;" width="26" height="26" viewBox="0 0 26 26"><path d="M3 3 H22 M3 3 L6 1 M3 3 L6 5 M22 3 L19 1 M22 3 L19 5" stroke="#2f77c8" stroke-width="0.9" fill="none"/><g fill="#fff" stroke="#888" stroke-width="0.7"><rect x="1" y="7" width="23" height="17"/><path d="M1 12.5 H24 M1 18 H24 M8 7 V24 M16 7 V24"/></g><rect x="8" y="11" width="6" height="7" fill="#2f77c8"/></svg>
<div class="t" style="top:195.50px;font-size:9.94px;line-height:12px;color:#333;transform:scaleX(0.9259);transform-origin:center center;left:1070.00px;width:60px;text-align:center;">Формат</div>
<div class="t" style="top:208.50px;font-size:9.72px;line-height:12px;color:#333;transform:scaleX(0.9259);transform-origin:center center;left:1090.00px;width:20px;text-align:center;">˅</div>
<svg class="a" style="left:1133px;top:168px;" width="13" height="12" viewBox="0 0 13 12"><path d="M11.5 2.5 V1 H1.5 L6.5 6 L1.5 11 H11.5 V9.5" stroke="#444" stroke-width="1.5" fill="none"/></svg>
<div class="t" style="top:169.50px;font-size:9.72px;line-height:12px;color:#333;transform:scaleX(0.9259);transform-origin:left center;left:1149.00px;">Автосумма</div>
<svg class="a" style="left:1209px;top:173px;" width="7" height="5" viewBox="0 0 7 5"><path d="M0.8 0.8 L3.5 3.8 L6.2 0.8" stroke="#555" stroke-width="1" fill="none"/></svg>
<svg class="a" style="left:1134px;top:186px;" width="12" height="12" viewBox="0 0 12 12"><rect x="0.5" y="0.5" width="11" height="11" fill="#fff" stroke="#666" stroke-width="0.9"/><rect x="0.5" y="0.5" width="11" height="2" fill="#666"/><path d="M6 4 V10 M3.5 7.5 L6 10 L8.5 7.5" stroke="#2f77c8" stroke-width="1.1" fill="none"/></svg>
<div class="t" style="top:187.50px;font-size:9.72px;line-height:12px;color:#333;transform:scaleX(0.9259);transform-origin:left center;left:1149.00px;">Заполнить ˅</div>
<svg class="a" style="left:1134px;top:204px;" width="12" height="11" viewBox="0 0 12 11"><path d="M1 8 L7 1 L11 4 L5 10Z" fill="#e96b86"/></svg>
<div class="t" style="top:205.50px;font-size:9.72px;line-height:12px;color:#333;transform:scaleX(0.9259);transform-origin:left center;left:1149.00px;">Очистить ˅</div>
<svg class="a" style="left:1235px;top:167px;" width="28" height="26" viewBox="0 0 28 26"><text x="0" y="11" font-size="12" font-family="Liberation Sans" fill="#2f77c8">А</text><text x="0" y="24" font-size="12" font-family="Liberation Sans" fill="#9b59b6">Я</text><path d="M11 7 H26 L20 14 V21 L17 19 V14Z" fill="#777"/></svg>
<div class="t" style="top:195.50px;font-size:9.94px;line-height:12px;color:#333;transform:scaleX(0.9259);transform-origin:center center;left:1210.00px;width:80px;text-align:center;">Сортировка</div>
<div class="t" style="top:208.50px;font-size:9.94px;line-height:12px;color:#333;transform:scaleX(0.9259);transform-origin:center center;left:1210.00px;width:80px;text-align:center;">и фильтр ˅</div>
<svg class="a" style="left:1292px;top:167px;" width="26" height="26" viewBox="0 0 26 26"><circle cx="15" cy="9" r="6.5" fill="none" stroke="#2f77c8" stroke-width="2.2"/><path d="M10 14 L3 21" stroke="#2f77c8" stroke-width="3" stroke-linecap="round"/></svg>
<div class="t" style="top:195.50px;font-size:9.94px;line-height:12px;color:#333;transform:scaleX(0.9259);transform-origin:center center;left:1265.00px;width:80px;text-align:center;">Найти и</div>
<div class="t" style="top:208.50px;font-size:9.94px;line-height:12px;color:#333;transform:scaleX(0.9259);transform-origin:center center;left:1265.00px;width:80px;text-align:center;">выделить ˅</div>
<div class="a" style="left:1368.00px;top:176.00px;width:8.00px;height:8.00px;background:#f59a25;border-radius:50%;"></div>
<div class="t" style="top:195.50px;font-size:9.94px;line-height:12px;color:#333;transform:scaleX(0.9259);transform-origin:center center;left:1332.50px;width:80px;text-align:center;">Надстройки</div>
<div class="a" style="left:10.50px;top:245.50px;width:79.50px;height:19.50px;background:#ffffff;box-sizing:border-box;border:1px solid #c6c6c6;"></div>
<svg class="a" style="left:78px;top:252px;" width="10" height="6" viewBox="0 0 10 6"><path d="M1 1 H9 L5 5Z" fill="#555"/></svg>
<div class="a" style="left:101.50px;top:251.00px;width:1.50px;height:1.50px;background:#999;"></div>
<div class="a" style="left:101.50px;top:255.00px;width:1.50px;height:1.50px;background:#999;"></div>
<div class="a" style="left:101.50px;top:259.00px;width:1.50px;height:1.50px;background:#999;"></div>
<div class="a" style="left:114.40px;top:245.50px;width:86.00px;height:19.50px;background:#ffffff;box-sizing:border-box;border:1px solid #c6c6c6;"></div>
<svg class="a" style="left:123px;top:249px;" width="12" height="12" viewBox="0 0 12 12"><path d="M2 2 L10 10 M10 2 L2 10" stroke="#b8b8b8" stroke-width="1.1"/></svg>
<svg class="a" style="left:151px;top:249px;" width="12" height="12" viewBox="0 0 12 12"><path d="M1.5 6 L4.5 9.5 L10.5 2" stroke="#b8b8b8" stroke-width="1.2" fill="none"/></svg>
<div class="t" style="top:248.50px;font-size:11.34px;line-height:14px;color:#555;transform:scaleX(0.9259);transform-origin:left center;left:180.00px;font-style:italic;font-family:"Liberation Serif",serif;">fx</div>
<div class="a" style="left:203.50px;top:245.50px;width:1314.50px;height:19.50px;background:#ffffff;box-sizing:border-box;border:1px solid #c6c6c6;"></div>
<div class="t" style="top:249.00px;font-size:10.4px;line-height:13px;color:#222;transform:scaleX(1.08);transform-origin:left center;left:213.00px;">Документ</div>
<svg class="a" style="left:1505px;top:251px;" width="10" height="8" viewBox="0 0 10 8"><path d="M1 1.5 L5 5.5 L9 1.5" stroke="#555" stroke-width="1.2" fill="none"/></svg>
<div class="a" style="left:6.00px;top:273.00px;width:1500.00px;height:622.30px;background:#ffffff;"></div>
<div class="a" style="left:6.00px;top:273.00px;width:1500.00px;height:15.00px;background:#e6e6e6;"></div>
<div class="a" style="left:6.00px;top:288.00px;width:20.00px;height:607.30px;background:#e6e6e6;"></div>
<svg class="a" style="left:13px;top:276px;" width="11" height="10" viewBox="0 0 11 10"><path d="M10 0 V10 H0Z" fill="#b4b4b4"/></svg>
<div class="a" style="left:26.00px;top:273.00px;width:1480.00px;height:15.00px;background:#d2d2d2;"></div>
<div class="a" style="left:71.00px;top:276.00px;width:1.00px;height:12.00px;background:#bdbdbd;"></div>
<div class="t" style="top:276.00px;font-size:9.8px;line-height:12px;color:#1f4f34;left:19.00px;width:60px;text-align:center;">A</div>
<div class="a" style="left:303.00px;top:276.00px;width:1.00px;height:12.00px;background:#bdbdbd;"></div>
<div class="t" style="top:276.00px;font-size:9.8px;line-height:12px;color:#1f4f34;left:157.50px;width:60px;text-align:center;">B</div>
<div class="a" style="left:357.00px;top:276.00px;width:1.00px;height:12.00px;background:#bdbdbd;"></div>
<div class="t" style="top:276.00px;font-size:9.8px;line-height:12px;color:#1f4f34;left:300.50px;width:60px;text-align:center;">C</div>
<div class="a" style="left:417.00px;top:276.00px;width:1.00px;height:12.00px;background:#bdbdbd;"></div>
<div class="t" style="top:276.00px;font-size:9.8px;line-height:12px;color:#1f4f34;left:357.50px;width:60px;text-align:center;">D</div>
<div class="a" style="left:559.00px;top:276.00px;width:1.00px;height:12.00px;background:#bdbdbd;"></div>
<div class="t" style="top:276.00px;font-size:9.8px;line-height:12px;color:#1f4f34;left:458.50px;width:60px;text-align:center;">E</div>
<div class="a" style="left:692.00px;top:276.00px;width:1.00px;height:12.00px;background:#bdbdbd;"></div>
<div class="t" style="top:276.00px;font-size:9.8px;line-height:12px;color:#1f4f34;left:596.00px;width:60px;text-align:center;">F</div>
<div class="a" style="left:803.00px;top:276.00px;width:1.00px;height:12.00px;background:#bdbdbd;"></div>
<div class="t" style="top:276.00px;font-size:9.8px;line-height:12px;color:#1f4f34;left:718.00px;width:60px;text-align:center;">G</div>
<div class="a" style="left:858.00px;top:276.00px;width:1.00px;height:12.00px;background:#bdbdbd;"></div>
<div class="t" style="top:276.00px;font-size:9.8px;line-height:12px;color:#1f4f34;left:801.00px;width:60px;text-align:center;">H</div>
<div class="a" style="left:1000.00px;top:276.00px;width:1.00px;height:12.00px;background:#bdbdbd;"></div>
<div class="t" style="top:276.00px;font-size:9.8px;line-height:12px;color:#1f4f34;left:899.50px;width:60px;text-align:center;">I</div>
<div class="a" style="left:1050.00px;top:276.00px;width:1.00px;height:12.00px;background:#bdbdbd;"></div>
<div class="t" style="top:276.00px;font-size:9.8px;line-height:12px;color:#1f4f34;left:995.50px;width:60px;text-align:center;">J</div>
<div class="a" style="left:1101.00px;top:276.00px;width:1.00px;height:12.00px;background:#bdbdbd;"></div>
<div class="t" style="top:276.00px;font-size:9.8px;line-height:12px;color:#1f4f34;left:1046.00px;width:60px;text-align:center;">K</div>
<div class="a" style="left:1152.00px;top:276.00px;width:1.00px;height:12.00px;background:#bdbdbd;"></div>
<div class="t" style="top:276.00px;font-size:9.8px;line-height:12px;color:#1f4f34;left:1097.00px;width:60px;text-align:center;">L</div>
<div class="a" style="left:1202.00px;top:276.00px;width:1.00px;height:12.00px;background:#bdbdbd;"></div>
<div class="t" style="top:276.00px;font-size:9.8px;line-height:12px;color:#1f4f34;left:1147.50px;width:60px;text-align:center;">M</div>
<div class="a" style="left:1253.00px;top:276.00px;width:1.00px;height:12.00px;background:#bdbdbd;"></div>
<div class="t" style="top:276.00px;font-size:9.8px;line-height:12px;color:#1f4f34;left:1198.00px;width:60px;text-align:center;">N</div>
<div class="a" style="left:1303.00px;top:276.00px;width:1.00px;height:12.00px;background:#bdbdbd;"></div>
<div class="t" style="top:276.00px;font-size:9.8px;line-height:12px;color:#1f4f34;left:1248.50px;width:60px;text-align:center;">O</div>
<div class="a" style="left:1354.00px;top:276.00px;width:1.00px;height:12.00px;background:#bdbdbd;"></div>
<div class="t" style="top:276.00px;font-size:9.8px;line-height:12px;color:#1f4f34;left:1299.00px;width:60px;text-align:center;">P</div>
<div class="a" style="left:1404.00px;top:276.00px;width:1.00px;height:12.00px;background:#bdbdbd;"></div>
<div class="t" style="top:276.00px;font-size:9.8px;line-height:12px;color:#1f4f34;left:1349.50px;width:60px;text-align:center;">Q</div>
<div class="a" style="left:1455.00px;top:276.00px;width:1.00px;height:12.00px;background:#bdbdbd;"></div>
<div class="t" style="top:276.00px;font-size:9.8px;line-height:12px;color:#1f4f34;left:1400.00px;width:60px;text-align:center;">R</div>
<div class="a" style="left:1505.00px;top:276.00px;width:1.00px;height:12.00px;background:#bdbdbd;"></div>
<div class="t" style="top:276.00px;font-size:9.8px;line-height:12px;color:#1f4f34;left:1450.50px;width:60px;text-align:center;">S</div>
<div class="a" style="left:6.00px;top:288.40px;width:20.00px;height:13.10px;background:#9fd5b7;"></div>
<div class="a" style="left:6.00px;top:301.00px;width:20.00px;height:1.00px;background:#c8c8c8;"></div>
<div class="t" style="top:288.45px;font-size:11px;line-height:14px;color:#235a3b;left:5.00px;width:22px;text-align:center;">1</div>
<div class="a" style="left:6.00px;top:301.50px;width:20.00px;height:12.80px;background:#d3f0e0;"></div>
<div class="a" style="left:6.00px;top:313.80px;width:20.00px;height:1.00px;background:#c8c8c8;"></div>
<div class="t" style="top:301.40px;font-size:11px;line-height:14px;color:#235a3b;left:5.00px;width:22px;text-align:center;">2</div>
<div class="a" style="left:6.00px;top:314.30px;width:20.00px;height:12.50px;background:#d3f0e0;"></div>
<div class="a" style="left:6.00px;top:326.30px;width:20.00px;height:1.00px;background:#c8c8c8;"></div>
<div class="t" style="top:314.05px;font-size:11px;line-height:14px;color:#235a3b;left:5.00px;width:22px;text-align:center;">3</div>
<div class="a" style="left:6.00px;top:326.80px;width:20.00px;height:12.70px;background:#d3f0e0;"></div>
<div class="a" style="left:6.00px;top:339.00px;width:20.00px;height:1.00px;background:#c8c8c8;"></div>
<div class="t" style="top:326.65px;font-size:11px;line-height:14px;color:#235a3b;left:5.00px;width:22px;text-align:center;">4</div>
<div class="a" style="left:6.00px;top:339.50px;width:20.00px;height:12.50px;background:#d3f0e0;"></div>
<div class="a" style="left:6.00px;top:351.50px;width:20.00px;height:1.00px;background:#c8c8c8;"></div>
<div class="t" style="top:339.25px;font-size:11px;line-height:14px;color:#235a3b;left:5.00px;width:22px;text-align:center;">5</div>
<div class="a" style="left:6.00px;top:352.00px;width:20.00px;height:12.70px;background:#d3f0e0;"></div>
<div class="a" style="left:6.00px;top:364.20px;width:20.00px;height:1.00px;background:#c8c8c8;"></div>
<div class="t" style="top:351.85px;font-size:11px;line-height:14px;color:#235a3b;left:5.00px;width:22px;text-align:center;">6</div>
<div class="a" style="left:6.00px;top:364.70px;width:20.00px;height:12.70px;background:#d3f0e0;"></div>
<div class="a" style="left:6.00px;top:376.90px;width:20.00px;height:1.00px;background:#c8c8c8;"></div>
<div class="t" style="top:364.55px;font-size:11px;line-height:14px;color:#235a3b;left:5.00px;width:22px;text-align:center;">7</div>
<div class="a" style="left:6.00px;top:389.50px;width:20.00px;height:1.00px;background:#c8c8c8;"></div>
<div class="t" style="top:377.20px;font-size:11px;line-height:14px;color:#222222;left:5.00px;width:22px;text-align:center;">8</div>
<div class="a" style="left:6.00px;top:402.10px;width:20.00px;height:1.00px;background:#c8c8c8;"></div>
<div class="t" style="top:389.80px;font-size:11px;line-height:14px;color:#222222;left:5.00px;width:22px;text-align:center;">9</div>
<div class="a" style="left:6.00px;top:414.90px;width:20.00px;height:1.00px;background:#c8c8c8;"></div>
<div class="t" style="top:402.60px;font-size:11px;line-height:14px;color:#222222;left:5.00px;width:22px;text-align:center;">10</div>
<div class="a" style="left:6.00px;top:427.50px;width:20.00px;height:1.00px;background:#c8c8c8;"></div>
<div class="t" style="top:415.20px;font-size:11px;line-height:14px;color:#222222;left:5.00px;width:22px;text-align:center;">11</div>
<div class="a" style="left:6.00px;top:440.10px;width:20.00px;height:1.00px;background:#c8c8c8;"></div>
<div class="t" style="top:427.80px;font-size:11px;line-height:14px;color:#222222;left:5.00px;width:22px;text-align:center;">12</div>
<div class="a" style="left:6.00px;top:452.70px;width:20.00px;height:1.00px;background:#c8c8c8;"></div>
<div class="t" style="top:440.40px;font-size:11px;line-height:14px;color:#222222;left:5.00px;width:22px;text-align:center;">13</div>
<div class="a" style="left:6.00px;top:465.00px;width:20.00px;height:1.00px;background:#c8c8c8;"></div>
<div class="t" style="top:452.70px;font-size:11px;line-height:14px;color:#222222;left:5.00px;width:22px;text-align:center;">14</div>
<div class="a" style="left:6.00px;top:575.90px;width:20.00px;height:1.00px;background:#c8c8c8;"></div>
<div class="t" style="top:563.60px;font-size:11px;line-height:14px;color:#222222;left:5.00px;width:22px;text-align:center;">15</div>
<div class="a" style="left:6.00px;top:588.20px;width:20.00px;height:1.00px;background:#c8c8c8;"></div>
<div class="t" style="top:575.90px;font-size:11px;line-height:14px;color:#222222;left:5.00px;width:22px;text-align:center;">16</div>
<div class="a" style="left:6.00px;top:603.90px;width:20.00px;height:1.00px;background:#c8c8c8;"></div>
<div class="t" style="top:591.60px;font-size:11px;line-height:14px;color:#222222;left:5.00px;width:22px;text-align:center;">17</div>
<div class="a" style="left:6.00px;top:663.10px;width:20.00px;height:1.00px;background:#c8c8c8;"></div>
<div class="t" style="top:650.80px;font-size:11px;line-height:14px;color:#222222;left:5.00px;width:22px;text-align:center;">18</div>
<div class="a" style="left:6.00px;top:674.90px;width:20.00px;height:1.00px;background:#c8c8c8;"></div>
<div class="t" style="top:662.60px;font-size:11px;line-height:14px;color:#222222;left:5.00px;width:22px;text-align:center;">19</div>
<div class="a" style="left:6.00px;top:722.80px;width:20.00px;height:1.00px;background:#c8c8c8;"></div>
<div class="t" style="top:710.50px;font-size:11px;line-height:14px;color:#222222;left:5.00px;width:22px;text-align:center;">20</div>
<div class="a" style="left:6.00px;top:734.20px;width:20.00px;height:1.00px;background:#c8c8c8;"></div>
<div class="t" style="top:721.90px;font-size:11px;line-height:14px;color:#222222;left:5.00px;width:22px;text-align:center;">21</div>
<div class="a" style="left:6.00px;top:757.80px;width:20.00px;height:1.00px;background:#c8c8c8;"></div>
<div class="t" style="top:745.50px;font-size:11px;line-height:14px;color:#222222;left:5.00px;width:22px;text-align:center;">22</div>
<div class="a" style="left:6.00px;top:773.90px;width:20.00px;height:1.00px;background:#c8c8c8;"></div>
<div class="t" style="top:761.60px;font-size:11px;line-height:14px;color:#222222;left:5.00px;width:22px;text-align:center;">23</div>
<div class="a" style="left:6.00px;top:785.90px;width:20.00px;height:1.00px;background:#c8c8c8;"></div>
<div class="t" style="top:773.60px;font-size:11px;line-height:14px;color:#222222;left:5.00px;width:22px;text-align:center;">24</div>
<div class="a" style="left:6.00px;top:820.80px;width:20.00px;height:1.00px;background:#c8c8c8;"></div>
<div class="t" style="top:808.50px;font-size:11px;line-height:14px;color:#222222;left:5.00px;width:22px;text-align:center;">25</div>
<div class="a" style="left:6.00px;top:832.80px;width:20.00px;height:1.00px;background:#c8c8c8;"></div>
<div class="t" style="top:820.50px;font-size:11px;line-height:14px;color:#222222;left:5.00px;width:22px;text-align:center;">26</div>
<div class="a" style="left:6.00px;top:868.90px;width:20.00px;height:1.00px;background:#c8c8c8;"></div>
<div class="t" style="top:856.60px;font-size:11px;line-height:14px;color:#222222;left:5.00px;width:22px;text-align:center;">27</div>
<div class="a" style="left:6.00px;top:880.80px;width:20.00px;height:1.00px;background:#c8c8c8;"></div>
<div class="t" style="top:868.50px;font-size:11px;line-height:14px;color:#222222;left:5.00px;width:22px;text-align:center;">28</div>
<div class="a" style="left:6.00px;top:894.80px;width:20.00px;height:1.00px;background:#c8c8c8;"></div>
<div class="a" style="left:25.50px;top:288.00px;width:1.00px;height:607.30px;background:#bdbdbd;"></div>
<div class="a" style="left:26.00px;top:301.00px;width:1480.00px;height:1.00px;background:#dcdbdc;"></div>
<div class="a" style="left:26.00px;top:313.80px;width:1480.00px;height:1.00px;background:#dcdbdc;"></div>
<div class="a" style="left:26.00px;top:326.30px;width:1480.00px;height:1.00px;background:#dcdbdc;"></div>
<div class="a" style="left:26.00px;top:339.00px;width:1480.00px;height:1.00px;background:#dcdbdc;"></div>
<div class="a" style="left:26.00px;top:351.50px;width:1480.00px;height:1.00px;background:#dcdbdc;"></div>
<div class="a" style="left:26.00px;top:364.20px;width:1480.00px;height:1.00px;background:#dcdbdc;"></div>
<div class="a" style="left:26.00px;top:376.90px;width:1480.00px;height:1.00px;background:#dcdbdc;"></div>
<div class="a" style="left:26.00px;top:389.50px;width:1480.00px;height:1.00px;background:#dcdbdc;"></div>
<div class="a" style="left:26.00px;top:402.10px;width:1480.00px;height:1.00px;background:#dcdbdc;"></div>
<div class="a" style="left:26.00px;top:414.90px;width:1480.00px;height:1.00px;background:#dcdbdc;"></div>
<div class="a" style="left:26.00px;top:427.50px;width:1480.00px;height:1.00px;background:#dcdbdc;"></div>
<div class="a" style="left:26.00px;top:440.10px;width:1480.00px;height:1.00px;background:#dcdbdc;"></div>
<div class="a" style="left:26.00px;top:452.70px;width:1480.00px;height:1.00px;background:#dcdbdc;"></div>
<div class="a" style="left:26.00px;top:465.00px;width:1480.00px;height:1.00px;background:#dcdbdc;"></div>
<div class="a" style="left:26.00px;top:575.90px;width:1480.00px;height:1.00px;background:#dcdbdc;"></div>
<div class="a" style="left:26.00px;top:588.20px;width:1480.00px;height:1.00px;background:#dcdbdc;"></div>
<div class="a" style="left:26.00px;top:603.90px;width:1480.00px;height:1.00px;background:#dcdbdc;"></div>
<div class="a" style="left:26.00px;top:663.10px;width:1480.00px;height:1.00px;background:#dcdbdc;"></div>
<div class="a" style="left:26.00px;top:674.90px;width:1480.00px;height:1.00px;background:#dcdbdc;"></div>
<div class="a" style="left:26.00px;top:722.80px;width:1480.00px;height:1.00px;background:#dcdbdc;"></div>
<div class="a" style="left:26.00px;top:734.20px;width:1480.00px;height:1.00px;background:#dcdbdc;"></div>
<div class="a" style="left:26.00px;top:757.80px;width:1480.00px;height:1.00px;background:#dcdbdc;"></div>
<div class="a" style="left:26.00px;top:773.90px;width:1480.00px;height:1.00px;background:#dcdbdc;"></div>
<div class="a" style="left:26.00px;top:785.90px;width:1480.00px;height:1.00px;background:#dcdbdc;"></div>
<div class="a" style="left:26.00px;top:820.80px;width:1480.00px;height:1.00px;background:#dcdbdc;"></div>
<div class="a" style="left:26.00px;top:832.80px;width:1480.00px;height:1.00px;background:#dcdbdc;"></div>
<div class="a" style="left:26.00px;top:868.90px;width:1480.00px;height:1.00px;background:#dcdbdc;"></div>
<div class="a" style="left:26.00px;top:880.80px;width:1480.00px;height:1.00px;background:#dcdbdc;"></div>
<div class="a" style="left:26.00px;top:894.80px;width:1480.00px;height:1.00px;background:#dcdbdc;"></div>
<div class="a" style="left:71.00px;top:288.40px;width:1.00px;height:38.40px;background:#dcdbdc;"></div>
<div class="a" style="left:71.00px;top:390.00px;width:1.00px;height:12.60px;background:#dcdbdc;"></div>
<div class="a" style="left:71.00px;top:453.20px;width:1.00px;height:442.10px;background:#dcdbdc;"></div>
<div class="a" style="left:303.00px;top:288.40px;width:1.00px;height:606.90px;background:#dcdbdc;"></div>
<div class="a" style="left:357.00px;top:301.50px;width:1.00px;height:25.30px;background:#dcdbdc;"></div>
<div class="a" style="left:357.00px;top:339.50px;width:1.00px;height:25.20px;background:#dcdbdc;"></div>
<div class="a" style="left:357.00px;top:377.40px;width:1.00px;height:38.00px;background:#dcdbdc;"></div>
<div class="a" style="left:357.00px;top:428.00px;width:1.00px;height:12.60px;background:#dcdbdc;"></div>
<div class="a" style="left:357.00px;top:453.20px;width:1.00px;height:442.10px;background:#dcdbdc;"></div>
<div class="a" style="left:417.00px;top:301.50px;width:1.00px;height:25.30px;background:#dcdbdc;"></div>
<div class="a" style="left:417.00px;top:339.50px;width:1.00px;height:25.20px;background:#dcdbdc;"></div>
<div class="a" style="left:417.00px;top:377.40px;width:1.00px;height:63.20px;background:#dcdbdc;"></div>
<div class="a" style="left:417.00px;top:453.20px;width:1.00px;height:442.10px;background:#dcdbdc;"></div>
<div class="a" style="left:559.00px;top:288.40px;width:1.00px;height:38.40px;background:#dcdbdc;"></div>
<div class="a" style="left:559.00px;top:339.50px;width:1.00px;height:555.80px;background:#dcdbdc;"></div>
<div class="a" style="left:692.00px;top:288.40px;width:1.00px;height:38.40px;background:#dcdbdc;"></div>
<div class="a" style="left:692.00px;top:339.50px;width:1.00px;height:555.80px;background:#dcdbdc;"></div>
<div class="a" style="left:803.00px;top:288.40px;width:1.00px;height:38.40px;background:#dcdbdc;"></div>
<div class="a" style="left:803.00px;top:339.50px;width:1.00px;height:555.80px;background:#dcdbdc;"></div>
<div class="a" style="left:858.00px;top:288.40px;width:1.00px;height:38.40px;background:#dcdbdc;"></div>
<div class="a" style="left:858.00px;top:339.50px;width:1.00px;height:555.80px;background:#dcdbdc;"></div>
<div class="a" style="left:1000.00px;top:288.40px;width:1.00px;height:606.90px;background:#dcdbdc;"></div>
<div class="a" style="left:1050.00px;top:288.40px;width:1.00px;height:606.90px;background:#dcdbdc;"></div>
<div class="a" style="left:1101.00px;top:288.40px;width:1.00px;height:606.90px;background:#dcdbdc;"></div>
<div class="a" style="left:1152.00px;top:288.40px;width:1.00px;height:606.90px;background:#dcdbdc;"></div>
<div class="a" style="left:1202.00px;top:288.40px;width:1.00px;height:606.90px;background:#dcdbdc;"></div>
<div class="a" style="left:1253.00px;top:288.40px;width:1.00px;height:606.90px;background:#dcdbdc;"></div>
<div class="a" style="left:1303.00px;top:288.40px;width:1.00px;height:606.90px;background:#dcdbdc;"></div>
<div class="a" style="left:1354.00px;top:288.40px;width:1.00px;height:606.90px;background:#dcdbdc;"></div>
<div class="a" style="left:1404.00px;top:288.40px;width:1.00px;height:606.90px;background:#dcdbdc;"></div>
<div class="a" style="left:1455.00px;top:288.40px;width:1.00px;height:606.90px;background:#dcdbdc;"></div>
<div class="a" style="left:1505.00px;top:288.40px;width:1.00px;height:606.90px;background:#dcdbdc;"></div>
<div class="a" style="left:26.00px;top:288.00px;width:1480.00px;height:83.50px;background:#c8c7c9;"></div>
<div class="a" style="left:26.00px;top:301.00px;width:1480.00px;height:1.00px;background:#a9a9ab;"></div>
<div class="a" style="left:26.00px;top:313.80px;width:1480.00px;height:1.00px;background:#a9a9ab;"></div>
<div class="a" style="left:26.00px;top:326.30px;width:1480.00px;height:1.00px;background:#a9a9ab;"></div>
<div class="a" style="left:26.00px;top:339.00px;width:1480.00px;height:1.00px;background:#a9a9ab;"></div>
<div class="a" style="left:26.00px;top:351.50px;width:1480.00px;height:1.00px;background:#a9a9ab;"></div>
<div class="a" style="left:26.00px;top:364.20px;width:1480.00px;height:1.00px;background:#a9a9ab;"></div>
<div class="a" style="left:71.00px;top:288.40px;width:1.00px;height:38.40px;background:#a9a9ab;"></div>
<div class="a" style="left:303.00px;top:288.40px;width:1.00px;height:83.10px;background:#a9a9ab;"></div>
<div class="a" style="left:357.00px;top:301.50px;width:1.00px;height:25.30px;background:#a9a9ab;"></div>
<div class="a" style="left:357.00px;top:339.50px;width:1.00px;height:25.20px;background:#a9a9ab;"></div>
<div class="a" style="left:417.00px;top:301.50px;width:1.00px;height:25.30px;background:#a9a9ab;"></div>
<div class="a" style="left:417.00px;top:339.50px;width:1.00px;height:25.20px;background:#a9a9ab;"></div>
<div class="a" style="left:559.00px;top:288.40px;width:1.00px;height:38.40px;background:#a9a9ab;"></div>
<div class="a" style="left:559.00px;top:339.50px;width:1.00px;height:32.00px;background:#a9a9ab;"></div>
<div class="a" style="left:692.00px;top:288.40px;width:1.00px;height:38.40px;background:#a9a9ab;"></div>
<div class="a" style="left:692.00px;top:339.50px;width:1.00px;height:32.00px;background:#a9a9ab;"></div>
<div class="a" style="left:803.00px;top:288.40px;width:1.00px;height:38.40px;background:#a9a9ab;"></div>
<div class="a" style="left:803.00px;top:339.50px;width:1.00px;height:32.00px;background:#a9a9ab;"></div>
<div class="a" style="left:858.00px;top:288.40px;width:1.00px;height:38.40px;background:#a9a9ab;"></div>
<div class="a" style="left:858.00px;top:339.50px;width:1.00px;height:32.00px;background:#a9a9ab;"></div>
<div class="a" style="left:1000.00px;top:288.40px;width:1.00px;height:83.10px;background:#a9a9ab;"></div>
<div class="a" style="left:1050.00px;top:288.40px;width:1.00px;height:83.10px;background:#a9a9ab;"></div>
<div class="a" style="left:1101.00px;top:288.40px;width:1.00px;height:83.10px;background:#a9a9ab;"></div>
<div class="a" style="left:1152.00px;top:288.40px;width:1.00px;height:83.10px;background:#a9a9ab;"></div>
<div class="a" style="left:1202.00px;top:288.40px;width:1.00px;height:83.10px;background:#a9a9ab;"></div>
<div class="a" style="left:1253.00px;top:288.40px;width:1.00px;height:83.10px;background:#a9a9ab;"></div>
<div class="a" style="left:1303.00px;top:288.40px;width:1.00px;height:83.10px;background:#a9a9ab;"></div>
<div class="a" style="left:1354.00px;top:288.40px;width:1.00px;height:83.10px;background:#a9a9ab;"></div>
<div class="a" style="left:1404.00px;top:288.40px;width:1.00px;height:83.10px;background:#a9a9ab;"></div>
<div class="a" style="left:1455.00px;top:288.40px;width:1.00px;height:83.10px;background:#a9a9ab;"></div>
<div class="a" style="left:1505.00px;top:288.40px;width:1.00px;height:83.10px;background:#a9a9ab;"></div>
<div class="a" style="left:27.00px;top:289.00px;width:43.50px;height:11.50px;background:#ffffff;"></div>
<div class="a" style="left:26.50px;top:289.30px;width:1479.50px;height:81.20px;box-sizing:border-box;border:1px solid #ffffff;border-right:0;"></div>
<div class="a" style="left:25.20px;top:287.80px;width:1480.80px;height:83.40px;box-sizing:border-box;border:1.5px solid #217346;border-right:0;"></div>
<div class="a" style="left:23.00px;top:368.50px;width:5.00px;height:5.00px;background:#217346;"></div>
<div class="a" style="left:6.00px;top:379.00px;width:52.00px;height:15.00px;background:#ffffff;box-sizing:border-box;border:1px solid #c8c8c8;"></div>
<div class="t" style="top:381.00px;font-size:8.6px;line-height:11px;color:#777777;left:7.50px;">7R x 16384C</div>
<div class="t" style="top:289.40px;font-size:10.67px;line-height:13px;color:#111111;transform:scaleX(0.9091);transform-origin:left center;left:28.10px;-webkit-text-stroke:0.1px #111;">Документ</div>
<div class="t" style="top:289.40px;font-size:10.67px;line-height:13px;color:#111111;transform:scaleX(0.9091);transform-origin:left center;left:305.10px;-webkit-text-stroke:0.1px #111;">Ведомость объемов работ</div>
<div class="t" style="top:302.20px;font-size:10.67px;line-height:13px;color:#111111;transform:scaleX(0.9091);transform-origin:left center;left:28.10px;-webkit-text-stroke:0.1px #111;">Версия</div>
<div class="t" style="top:302.20px;font-size:10.67px;line-height:13px;color:#111111;transform:scaleX(0.9091);transform-origin:left center;left:305.10px;-webkit-text-stroke:0.1px #111;">3_01</div>
<div class="t" style="top:327.40px;font-size:10.67px;line-height:13px;color:#111111;transform:scaleX(0.9091);transform-origin:left center;left:28.10px;-webkit-text-stroke:0.1px #111;">Наименование стройки</div>
<div class="t" style="top:327.40px;font-size:10.67px;line-height:13px;color:#111111;transform:scaleX(0.9091);transform-origin:left center;left:305.10px;-webkit-text-stroke:0.1px #111;">Строительство улицы Арузная на участке от проспекта Сахорова до Крымской кольцевой автомобильной дороги в г.Березовский</div>
<div class="t" style="top:339.90px;font-size:10.67px;line-height:13px;color:#111111;transform:scaleX(0.9091);transform-origin:left center;left:28.10px;-webkit-text-stroke:0.1px #111;">Наименование объекта капитального строительства</div>
<div class="t" style="top:339.90px;font-size:10.67px;line-height:13px;color:#111111;transform:scaleX(0.9091);transform-origin:left center;left:305.10px;-webkit-text-stroke:0.1px #111;">ВЛ 500 кВ</div>
<div class="t" style="top:352.60px;font-size:10.67px;line-height:13px;color:#111111;transform:scaleX(0.9091);transform-origin:left center;left:28.10px;-webkit-text-stroke:0.1px #111;">Ведомость объемов работ №</div>
<div class="t" style="top:352.60px;font-size:10.67px;line-height:13px;color:#111111;transform:scaleX(0.9091);transform-origin:left center;left:305.10px;-webkit-text-stroke:0.1px #111;">ВОР 01-07-04</div>
<div class="t" style="top:365.30px;font-size:10.67px;line-height:13px;color:#111111;transform:scaleX(0.9091);transform-origin:left center;left:28.10px;-webkit-text-stroke:0.1px #111;">Основание((наименование раздела (подраздела) ПД))</div>
<div class="t" style="top:365.30px;font-size:10.67px;line-height:13px;color:#111111;transform:scaleX(0.9091);transform-origin:left center;left:305.10px;-webkit-text-stroke:0.1px #111;">Проектная документация</div>
<div class="t" style="top:377.90px;font-size:10.67px;line-height:13px;color:#111111;transform:scaleX(0.9091);transform-origin:left center;left:29.00px;-webkit-text-stroke:0.1px #111;">Дата составления</div>
<div class="t" style="top:377.90px;font-size:10.67px;line-height:13px;color:#111111;transform:scaleX(0.9091);transform-origin:left center;left:305.10px;-webkit-text-stroke:0.1px #111;">23.01.2025</div>
<div class="t" style="top:403.30px;font-size:10.67px;line-height:13px;color:#111111;transform:scaleX(0.9091);transform-origin:left center;left:28.10px;-webkit-text-stroke:0.1px #111;">Составил ФИО</div>
<div class="t" style="top:403.30px;font-size:10.67px;line-height:13px;color:#111111;transform:scaleX(0.9091);transform-origin:left center;left:305.10px;-webkit-text-stroke:0.1px #111;">Кугатов Д.Е.</div>
<div class="t" style="top:415.90px;font-size:10.67px;line-height:13px;color:#111111;transform:scaleX(0.9091);transform-origin:left center;left:28.10px;-webkit-text-stroke:0.1px #111;">Составил должность</div>
<div class="t" style="top:415.90px;font-size:10.67px;line-height:13px;color:#111111;transform:scaleX(0.9091);transform-origin:left center;left:305.10px;-webkit-text-stroke:0.1px #111;">Ведущий сметчик</div>
<div class="t" style="top:428.50px;font-size:10.67px;line-height:13px;color:#111111;transform:scaleX(0.9091);transform-origin:left center;left:28.10px;-webkit-text-stroke:0.1px #111;">Проверил ФИО</div>
<div class="t" style="top:428.50px;font-size:10.67px;line-height:13px;color:#111111;transform:scaleX(0.9091);transform-origin:left center;left:305.10px;-webkit-text-stroke:0.1px #111;">Дятлов К.Г.</div>
<div class="t" style="top:441.10px;font-size:10.67px;line-height:13px;color:#111111;transform:scaleX(0.9091);transform-origin:left center;left:28.10px;-webkit-text-stroke:0.1px #111;">Проверил должность</div>
<div class="t" style="top:441.10px;font-size:10.67px;line-height:13px;color:#111111;transform:scaleX(0.9091);transform-origin:left center;left:305.10px;-webkit-text-stroke:0.1px #111;">Главный инженер проекта</div>
<div class="a" style="left:27.00px;top:365.20px;width:1479.00px;height:4.50px;background:rgba(200,199,201,0.8);"></div>
<div class="a" style="left:25.20px;top:369.70px;width:1480.80px;height:1.50px;background:#217346;"></div>
<div class="a" style="left:23.00px;top:368.50px;width:5.00px;height:5.00px;background:#217346;"></div>
<div class="a" style="left:6.00px;top:379.00px;width:52.00px;height:15.00px;background:#ffffff;box-sizing:border-box;border:1px solid #c8c8c8;"></div>
<div class="t" style="top:381.00px;font-size:8.6px;line-height:11px;color:#777777;left:7.50px;">7R x 16384C</div>
<div class="a" style="left:26.50px;top:465.50px;width:974.00px;height:429.80px;background:#ffffff;"></div>
<div class="a" style="left:26.00px;top:465.00px;width:975.00px;height:1.00px;background:#1a1a1a;"></div>
<div class="a" style="left:26.00px;top:575.90px;width:975.00px;height:1.00px;background:#1a1a1a;"></div>
<div class="a" style="left:26.00px;top:588.20px;width:975.00px;height:1.00px;background:#1a1a1a;"></div>
<div class="a" style="left:26.00px;top:603.90px;width:975.00px;height:1.00px;background:#1a1a1a;"></div>
<div class="a" style="left:26.00px;top:663.10px;width:975.00px;height:1.00px;background:#1a1a1a;"></div>
<div class="a" style="left:26.00px;top:674.90px;width:975.00px;height:1.00px;background:#1a1a1a;"></div>
<div class="a" style="left:26.00px;top:722.80px;width:975.00px;height:1.00px;background:#1a1a1a;"></div>
<div class="a" style="left:26.00px;top:757.80px;width:975.00px;height:1.00px;background:#1a1a1a;"></div>
<div class="a" style="left:26.00px;top:773.90px;width:975.00px;height:1.00px;background:#1a1a1a;"></div>
<div class="a" style="left:26.00px;top:820.80px;width:975.00px;height:1.00px;background:#1a1a1a;"></div>
<div class="a" style="left:26.00px;top:868.90px;width:975.00px;height:1.00px;background:#1a1a1a;"></div>
<div class="a" style="left:559.00px;top:785.90px;width:300.00px;height:1.00px;background:#1a1a1a;"></div>
<div class="a" style="left:559.00px;top:832.80px;width:300.00px;height:1.00px;background:#1a1a1a;"></div>
<div class="a" style="left:559.00px;top:880.80px;width:300.00px;height:1.00px;background:#1a1a1a;"></div>
<div class="a" style="left:26.00px;top:465.00px;width:1.00px;height:124.20px;background:#1a1a1a;"></div>
<div class="a" style="left:26.00px;top:603.90px;width:1.00px;height:154.90px;background:#1a1a1a;"></div>
<div class="a" style="left:26.00px;top:773.90px;width:1.00px;height:121.90px;background:#1a1a1a;"></div>
<div class="a" style="left:71.00px;top:465.00px;width:1.00px;height:124.20px;background:#1a1a1a;"></div>
<div class="a" style="left:71.00px;top:603.90px;width:1.00px;height:154.90px;background:#1a1a1a;"></div>
<div class="a" style="left:71.00px;top:773.90px;width:1.00px;height:121.90px;background:#1a1a1a;"></div>
<div class="a" style="left:303.00px;top:465.00px;width:1.00px;height:124.20px;background:#1a1a1a;"></div>
<div class="a" style="left:303.00px;top:603.90px;width:1.00px;height:154.90px;background:#1a1a1a;"></div>
<div class="a" style="left:303.00px;top:773.90px;width:1.00px;height:121.90px;background:#1a1a1a;"></div>
<div class="a" style="left:357.00px;top:465.00px;width:1.00px;height:124.20px;background:#1a1a1a;"></div>
<div class="a" style="left:357.00px;top:603.90px;width:1.00px;height:154.90px;background:#1a1a1a;"></div>
<div class="a" style="left:357.00px;top:773.90px;width:1.00px;height:121.90px;background:#1a1a1a;"></div>
<div class="a" style="left:417.00px;top:465.00px;width:1.00px;height:124.20px;background:#1a1a1a;"></div>
<div class="a" style="left:417.00px;top:603.90px;width:1.00px;height:154.90px;background:#1a1a1a;"></div>
<div class="a" style="left:417.00px;top:773.90px;width:1.00px;height:121.90px;background:#1a1a1a;"></div>
<div class="a" style="left:559.00px;top:465.00px;width:1.00px;height:124.20px;background:#1a1a1a;"></div>
<div class="a" style="left:559.00px;top:603.90px;width:1.00px;height:154.90px;background:#1a1a1a;"></div>
<div class="a" style="left:559.00px;top:773.90px;width:1.00px;height:121.90px;background:#1a1a1a;"></div>
<div class="a" style="left:692.00px;top:465.00px;width:1.00px;height:124.20px;background:#1a1a1a;"></div>
<div class="a" style="left:692.00px;top:603.90px;width:1.00px;height:154.90px;background:#1a1a1a;"></div>
<div class="a" style="left:692.00px;top:773.90px;width:1.00px;height:121.90px;background:#1a1a1a;"></div>
<div class="a" style="left:803.00px;top:465.00px;width:1.00px;height:124.20px;background:#1a1a1a;"></div>
<div class="a" style="left:803.00px;top:603.90px;width:1.00px;height:154.90px;background:#1a1a1a;"></div>
<div class="a" style="left:803.00px;top:773.90px;width:1.00px;height:121.90px;background:#1a1a1a;"></div>
<div class="a" style="left:858.00px;top:465.00px;width:1.00px;height:124.20px;background:#1a1a1a;"></div>
<div class="a" style="left:858.00px;top:603.90px;width:1.00px;height:154.90px;background:#1a1a1a;"></div>
<div class="a" style="left:858.00px;top:773.90px;width:1.00px;height:121.90px;background:#1a1a1a;"></div>
<div class="a" style="left:1000.00px;top:465.00px;width:1.00px;height:124.20px;background:#1a1a1a;"></div>
<div class="a" style="left:1000.00px;top:603.90px;width:1.00px;height:154.90px;background:#1a1a1a;"></div>
<div class="a" style="left:1000.00px;top:773.90px;width:1.00px;height:121.90px;background:#1a1a1a;"></div>
<div class="a" style="left:26.00px;top:588.20px;width:1.00px;height:16.70px;background:#1a1a1a;"></div>
<div class="a" style="left:26.00px;top:757.80px;width:1.00px;height:17.10px;background:#1a1a1a;"></div>
<div class="a" style="left:1000.00px;top:588.20px;width:1.00px;height:16.70px;background:#1a1a1a;"></div>
<div class="a" style="left:1000.00px;top:757.80px;width:1.00px;height:17.10px;background:#1a1a1a;"></div>
<div class="a" style="left:26.50px;top:734.20px;width:974.00px;height:1.00px;background:#5a5a5a;"></div>
<div class="t" style="top:514.00px;font-size:11.22px;line-height:14px;color:#111;transform:scaleX(0.9091);transform-origin:center center;left:-101.00px;width:300px;text-align:center;-webkit-text-stroke:0.1px #111;">№ п.п.</div>
<div class="t" style="top:507.30px;font-size:11.22px;line-height:14px;color:#111;transform:scaleX(0.9091);transform-origin:center center;left:37.50px;width:300px;text-align:center;-webkit-text-stroke:0.1px #111;">Наименование работ, ресурсов, затрат по</div>
<div class="t" style="top:520.70px;font-size:11.22px;line-height:14px;color:#111;transform:scaleX(0.9091);transform-origin:center center;left:37.50px;width:300px;text-align:center;-webkit-text-stroke:0.1px #111;">проекту</div>
<div class="t" style="top:514.00px;font-size:11.22px;line-height:14px;color:#111;transform:scaleX(0.9091);transform-origin:center center;left:180.50px;width:300px;text-align:center;-webkit-text-stroke:0.1px #111;">Ед. изм.</div>
<div class="t" style="top:500.60px;font-size:11.22px;line-height:14px;color:#111;transform:scaleX(0.9091);transform-origin:center center;left:237.50px;width:300px;text-align:center;-webkit-text-stroke:0.1px #111;">Объем</div>
<div class="t" style="top:514.00px;font-size:11.22px;line-height:14px;color:#111;transform:scaleX(0.9091);transform-origin:center center;left:237.50px;width:300px;text-align:center;-webkit-text-stroke:0.1px #111;">работ /</div>
<div class="t" style="top:527.40px;font-size:11.22px;line-height:14px;color:#111;transform:scaleX(0.9091);transform-origin:center center;left:237.50px;width:300px;text-align:center;-webkit-text-stroke:0.1px #111;">Количество</div>
<div class="t" style="top:493.90px;font-size:11.22px;line-height:14px;color:#111;transform:scaleX(0.9091);transform-origin:center center;left:338.50px;width:300px;text-align:center;-webkit-text-stroke:0.1px #111;">Формула расчета объемов</div>
<div class="t" style="top:507.30px;font-size:11.22px;line-height:14px;color:#111;transform:scaleX(0.9091);transform-origin:center center;left:338.50px;width:300px;text-align:center;-webkit-text-stroke:0.1px #111;">работ и расхода</div>
<div class="t" style="top:520.70px;font-size:11.22px;line-height:14px;color:#111;transform:scaleX(0.9091);transform-origin:center center;left:338.50px;width:300px;text-align:center;-webkit-text-stroke:0.1px #111;">материалов, потребности</div>
<div class="t" style="top:534.10px;font-size:11.22px;line-height:14px;color:#111;transform:scaleX(0.9091);transform-origin:center center;left:338.50px;width:300px;text-align:center;-webkit-text-stroke:0.1px #111;">ресурсов</div>
<div class="t" style="top:500.60px;font-size:11.22px;line-height:14px;color:#111;transform:scaleX(0.9091);transform-origin:center center;left:476.00px;width:300px;text-align:center;-webkit-text-stroke:0.1px #111;">Ссылка на чертежи,</div>
<div class="t" style="top:514.00px;font-size:11.22px;line-height:14px;color:#111;transform:scaleX(0.9091);transform-origin:center center;left:476.00px;width:300px;text-align:center;-webkit-text-stroke:0.1px #111;">спецификации в проектной</div>
<div class="t" style="top:527.40px;font-size:11.22px;line-height:14px;color:#111;transform:scaleX(0.9091);transform-origin:center center;left:476.00px;width:300px;text-align:center;-webkit-text-stroke:0.1px #111;">документации</div>
<div class="t" style="top:514.00px;font-size:11.22px;line-height:14px;color:#111;transform:scaleX(0.9091);transform-origin:center center;left:598.00px;width:300px;text-align:center;-webkit-text-stroke:0.1px #111;">Наименование файла</div>
<div class="t" style="top:493.90px;font-size:11.22px;line-height:14px;color:#111;transform:scaleX(0.9091);transform-origin:center center;left:681.00px;width:300px;text-align:center;-webkit-text-stroke:0.1px #111;">Номер</div>
<div class="t" style="top:507.30px;font-size:11.22px;line-height:14px;color:#111;transform:scaleX(0.9091);transform-origin:center center;left:681.00px;width:300px;text-align:center;-webkit-text-stroke:0.1px #111;">страниц</div>
<div class="t" style="top:520.70px;font-size:11.22px;line-height:14px;color:#111;transform:scaleX(0.9091);transform-origin:center center;left:681.00px;width:300px;text-align:center;-webkit-text-stroke:0.1px #111;">(через</div>
<div class="t" style="top:534.10px;font-size:11.22px;line-height:14px;color:#111;transform:scaleX(0.9091);transform-origin:center center;left:681.00px;width:300px;text-align:center;-webkit-text-stroke:0.1px #111;">пробел)</div>
<div class="t" style="top:507.30px;font-size:11.22px;line-height:14px;color:#111;transform:scaleX(0.9091);transform-origin:center center;left:779.50px;width:300px;text-align:center;-webkit-text-stroke:0.1px #111;">Дополнительная</div>
<div class="t" style="top:520.70px;font-size:11.22px;line-height:14px;color:#111;transform:scaleX(0.9091);transform-origin:center center;left:779.50px;width:300px;text-align:center;-webkit-text-stroke:0.1px #111;">информация (комментарий)</div>
<div class="t" style="top:576.00px;font-size:10.56px;line-height:13px;color:#111;transform:scaleX(0.9091);transform-origin:center center;left:-101.00px;width:300px;text-align:center;-webkit-text-stroke:0.1px #111;">1</div>
<div class="t" style="top:576.00px;font-size:10.56px;line-height:13px;color:#111;transform:scaleX(0.9091);transform-origin:center center;left:37.50px;width:300px;text-align:center;-webkit-text-stroke:0.1px #111;">2</div>
<div class="t" style="top:576.00px;font-size:10.56px;line-height:13px;color:#111;transform:scaleX(0.9091);transform-origin:center center;left:180.50px;width:300px;text-align:center;-webkit-text-stroke:0.1px #111;">3</div>
<div class="t" style="top:576.00px;font-size:10.56px;line-height:13px;color:#111;transform:scaleX(0.9091);transform-origin:center center;left:237.50px;width:300px;text-align:center;-webkit-text-stroke:0.1px #111;">4</div>
<div class="t" style="top:576.00px;font-size:10.56px;line-height:13px;color:#111;transform:scaleX(0.9091);transform-origin:center center;left:338.50px;width:300px;text-align:center;-webkit-text-stroke:0.1px #111;">5</div>
<div class="t" style="top:576.00px;font-size:10.56px;line-height:13px;color:#111;transform:scaleX(0.9091);transform-origin:center center;left:476.00px;width:300px;text-align:center;-webkit-text-stroke:0.1px #111;">6</div>
<div class="t" style="top:576.00px;font-size:10.56px;line-height:13px;color:#111;transform:scaleX(0.9091);transform-origin:center center;left:598.00px;width:300px;text-align:center;-webkit-text-stroke:0.1px #111;">6.1</div>
<div class="t" style="top:576.00px;font-size:10.56px;line-height:13px;color:#111;transform:scaleX(0.9091);transform-origin:center center;left:681.00px;width:300px;text-align:center;-webkit-text-stroke:0.1px #111;">6.2</div>
<div class="t" style="top:576.00px;font-size:10.56px;line-height:13px;color:#111;transform:scaleX(0.9091);transform-origin:center center;left:779.50px;width:300px;text-align:center;-webkit-text-stroke:0.1px #111;">7</div>
<div class="t" style="top:590.00px;font-size:10.23px;line-height:13px;color:#111;transform:scaleX(0.9091);transform-origin:left center;font-weight:bold;left:28.50px;-webkit-text-stroke:0.1px #111;">Раздел 1. Лесовосстановительные работы</div>
<div class="t" style="top:759.50px;font-size:10.23px;line-height:13px;color:#111;transform:scaleX(0.9091);transform-origin:left center;font-weight:bold;left:28.50px;-webkit-text-stroke:0.1px #111;">Раздел 2. Создание лесных культур</div>
<div class="t" style="top:605.00px;font-size:9.68px;line-height:12px;color:#111;transform:scaleX(0.9091);transform-origin:center center;left:-51.00px;width:200px;text-align:center;-webkit-text-stroke:0.1px #111;">1</div>
<div class="t" style="top:605.00px;font-size:9.68px;line-height:12px;color:#111;transform:scaleX(0.9091);transform-origin:left center;left:74.00px;-webkit-text-stroke:0.1px #111;">Корчевка кустарника и мелколесья в грунтах</div>
<div class="t" style="top:616.80px;font-size:9.68px;line-height:12px;color:#111;transform:scaleX(0.9091);transform-origin:left center;left:74.00px;-webkit-text-stroke:0.1px #111;">естественного залегания корчевателями-</div>
<div class="t" style="top:628.60px;font-size:9.68px;line-height:12px;color:#111;transform:scaleX(0.9091);transform-origin:left center;left:74.00px;-webkit-text-stroke:0.1px #111;">собирателями на тракторе мощностью: 118 кВт (160</div>
<div class="t" style="top:640.40px;font-size:9.68px;line-height:12px;color:#111;transform:scaleX(0.9091);transform-origin:left center;left:74.00px;-webkit-text-stroke:0.1px #111;">л.с.), кустарник и мелколесье средние</div>
<div class="t" style="top:605.00px;font-size:9.68px;line-height:12px;color:#111;transform:scaleX(0.9091);transform-origin:center center;left:230.50px;width:200px;text-align:center;-webkit-text-stroke:0.1px #111;">га</div>
<div class="t" style="top:605.00px;font-size:9.68px;line-height:12px;color:#111;transform:scaleX(0.9091);transform-origin:right center;right:1504.50px;-webkit-text-stroke:0.1px #111;">0,6326</div>
<div class="t" style="top:605.00px;font-size:9.68px;line-height:12px;color:#111;transform:scaleX(0.9091);transform-origin:right center;right:1362.50px;-webkit-text-stroke:0.1px #111;">6326/10000</div>
<div class="t" style="top:605.00px;font-size:9.68px;line-height:12px;color:#111;transform:scaleX(0.9091);transform-origin:left center;left:562.00px;-webkit-text-stroke:0.1px #111;">200-007.1-ППО.ГЧ</div>
<div class="t" style="top:605.00px;font-size:9.68px;line-height:12px;color:#111;transform:scaleX(0.9091);transform-origin:left center;left:695.00px;-webkit-text-stroke:0.1px #111;">Раздел ПД№2.pdf</div>
<div class="t" style="top:605.00px;font-size:9.68px;line-height:12px;color:#111;transform:scaleX(0.9091);transform-origin:left center;left:806.00px;-webkit-text-stroke:0.1px #111;">1 2 3 4</div>
<div class="t" style="top:605.00px;font-size:9.68px;line-height:12px;color:#111;transform:scaleX(0.9091);transform-origin:left center;left:861.00px;-webkit-text-stroke:0.1px #111;">Подготовка почвы  - S = 6 326 м2</div>
<div class="t" style="top:616.80px;font-size:9.68px;line-height:12px;color:#111;transform:scaleX(0.9091);transform-origin:left center;left:861.00px;-webkit-text-stroke:0.1px #111;">= 0,6326 га (п.30, Приложение 1 к</div>
<div class="t" style="top:628.60px;font-size:9.68px;line-height:12px;color:#111;transform:scaleX(0.9091);transform-origin:left center;left:861.00px;-webkit-text-stroke:0.1px #111;">Приказу Минприроды России от</div>
<div class="t" style="top:640.40px;font-size:9.68px;line-height:12px;color:#111;transform:scaleX(0.9091);transform-origin:left center;left:861.00px;-webkit-text-stroke:0.1px #111;">29.12.2021 №1024) 200-007.1-</div>
<div class="t" style="top:652.20px;font-size:9.68px;line-height:12px;color:#111;transform:scaleX(0.9091);transform-origin:left center;left:861.00px;-webkit-text-stroke:0.1px #111;">ППО.ГЧ, л.5</div>
<div class="t" style="top:664.20px;font-size:9.68px;line-height:12px;color:#111;transform:scaleX(0.9091);transform-origin:center center;left:-51.00px;width:200px;text-align:center;-webkit-text-stroke:0.1px #111;">2</div>
<div class="t" style="top:664.20px;font-size:9.68px;line-height:12px;color:#111;transform:scaleX(0.9091);transform-origin:left center;left:74.00px;-webkit-text-stroke:0.1px #111;">Планировка участка: механизированным способом</div>
<div class="t" style="top:664.20px;font-size:9.68px;line-height:12px;color:#111;transform:scaleX(0.9091);transform-origin:center center;left:230.50px;width:200px;text-align:center;-webkit-text-stroke:0.1px #111;">м2</div>
<div class="t" style="top:664.20px;font-size:9.68px;line-height:12px;color:#111;transform:scaleX(0.9091);transform-origin:right center;right:1504.50px;-webkit-text-stroke:0.1px #111;">6326</div>
<div class="t" style="top:664.20px;font-size:9.68px;line-height:12px;color:#111;transform:scaleX(0.9091);transform-origin:right center;right:1362.50px;-webkit-text-stroke:0.1px #111;">6326</div>
<div class="t" style="top:664.20px;font-size:9.68px;line-height:12px;color:#111;transform:scaleX(0.9091);transform-origin:left center;left:562.00px;-webkit-text-stroke:0.1px #111;">200-007.1-ППО.ГЧ</div>
<div class="t" style="top:664.20px;font-size:9.68px;line-height:12px;color:#111;transform:scaleX(0.9091);transform-origin:left center;left:695.00px;-webkit-text-stroke:0.1px #111;">Раздел ПД№2.pdf</div>
<div class="t" style="top:664.20px;font-size:9.68px;line-height:12px;color:#111;transform:scaleX(0.9091);transform-origin:left center;left:806.00px;-webkit-text-stroke:0.1px #111;">1 2 3 4</div>
<div class="t" style="top:676.00px;font-size:9.68px;line-height:12px;color:#111;transform:scaleX(0.9091);transform-origin:center center;left:-51.00px;width:200px;text-align:center;-webkit-text-stroke:0.1px #111;">3</div>
<div class="t" style="top:676.00px;font-size:9.68px;line-height:12px;color:#111;transform:scaleX(0.9091);transform-origin:left center;left:74.00px;-webkit-text-stroke:0.1px #111;">Запашка площадей кустарниково-болотными</div>
<div class="t" style="top:687.80px;font-size:9.68px;line-height:12px;color:#111;transform:scaleX(0.9091);transform-origin:left center;left:74.00px;-webkit-text-stroke:0.1px #111;">навесными плугами на торфяных грунтах при</div>
<div class="t" style="top:699.60px;font-size:9.68px;line-height:12px;color:#111;transform:scaleX(0.9091);transform-origin:left center;left:74.00px;-webkit-text-stroke:0.1px #111;">количестве на 1 га стволов кустарника: от 5000 до</div>
<div class="t" style="top:711.40px;font-size:9.68px;line-height:12px;color:#111;transform:scaleX(0.9091);transform-origin:left center;left:74.00px;-webkit-text-stroke:0.1px #111;">10000 шт.</div>
<div class="t" style="top:676.00px;font-size:9.68px;line-height:12px;color:#111;transform:scaleX(0.9091);transform-origin:center center;left:230.50px;width:200px;text-align:center;-webkit-text-stroke:0.1px #111;">га</div>
<div class="t" style="top:676.00px;font-size:9.68px;line-height:12px;color:#111;transform:scaleX(0.9091);transform-origin:right center;right:1504.50px;-webkit-text-stroke:0.1px #111;">0,6326</div>
<div class="t" style="top:676.00px;font-size:9.68px;line-height:12px;color:#111;transform:scaleX(0.9091);transform-origin:right center;right:1362.50px;-webkit-text-stroke:0.1px #111;">6326/10000</div>
<div class="t" style="top:676.00px;font-size:9.68px;line-height:12px;color:#111;transform:scaleX(0.9091);transform-origin:left center;left:562.00px;-webkit-text-stroke:0.1px #111;">200-007.1-ППО.ГЧ</div>
<div class="t" style="top:676.00px;font-size:9.68px;line-height:12px;color:#111;transform:scaleX(0.9091);transform-origin:left center;left:695.00px;-webkit-text-stroke:0.1px #111;">Раздел ПД№2.pdf</div>
<div class="t" style="top:676.00px;font-size:9.68px;line-height:12px;color:#111;transform:scaleX(0.9091);transform-origin:left center;left:806.00px;-webkit-text-stroke:0.1px #111;">1 2 3 4</div>
<div class="t" style="top:723.90px;font-size:9.68px;line-height:12px;color:#111;transform:scaleX(0.9091);transform-origin:center center;left:-51.00px;width:200px;text-align:center;-webkit-text-stroke:0.1px #111;">4</div>
<div class="t" style="top:723.90px;font-size:9.68px;line-height:12px;color:#111;transform:scaleX(0.9091);transform-origin:left center;left:74.00px;-webkit-text-stroke:0.1px #111;">Маркировка площади</div>
<div class="t" style="top:723.90px;font-size:9.68px;line-height:12px;color:#111;transform:scaleX(0.9091);transform-origin:center center;left:230.50px;width:200px;text-align:center;-webkit-text-stroke:0.1px #111;">га</div>
<div class="t" style="top:723.90px;font-size:9.68px;line-height:12px;color:#111;transform:scaleX(0.9091);transform-origin:right center;right:1504.50px;-webkit-text-stroke:0.1px #111;">0,6326</div>
<div class="t" style="top:723.90px;font-size:9.68px;line-height:12px;color:#111;transform:scaleX(0.9091);transform-origin:right center;right:1362.50px;-webkit-text-stroke:0.1px #111;">6326/10000</div>
<div class="t" style="top:723.90px;font-size:9.68px;line-height:12px;color:#111;transform:scaleX(0.9091);transform-origin:left center;left:562.00px;-webkit-text-stroke:0.1px #111;">200-007.1-ППО.ГЧ</div>
<div class="t" style="top:723.90px;font-size:9.68px;line-height:12px;color:#111;transform:scaleX(0.9091);transform-origin:left center;left:695.00px;-webkit-text-stroke:0.1px #111;">Раздел ПД№2.pdf</div>
<div class="t" style="top:723.90px;font-size:9.68px;line-height:12px;color:#111;transform:scaleX(0.9091);transform-origin:left center;left:806.00px;-webkit-text-stroke:0.1px #111;">1 2 3 4</div>
<div class="t" style="top:735.30px;font-size:9.68px;line-height:12px;color:#111;transform:scaleX(0.9091);transform-origin:center center;left:-51.00px;width:200px;text-align:center;-webkit-text-stroke:0.1px #111;">5</div>
<div class="t" style="top:735.30px;font-size:9.68px;line-height:12px;color:#111;transform:scaleX(0.9091);transform-origin:left center;left:74.00px;-webkit-text-stroke:0.1px #111;">Нарезка пластов по раскорчеванным вырубкам</div>
<div class="t" style="top:735.30px;font-size:9.68px;line-height:12px;color:#111;transform:scaleX(0.9091);transform-origin:center center;left:230.50px;width:200px;text-align:center;-webkit-text-stroke:0.1px #111;">км</div>
<div class="t" style="top:735.30px;font-size:9.68px;line-height:12px;color:#111;transform:scaleX(0.9091);transform-origin:right center;right:1504.50px;-webkit-text-stroke:0.1px #111;">1,5815</div>
<div class="t" style="top:735.30px;font-size:9.68px;line-height:12px;color:#111;transform:scaleX(0.9091);transform-origin:right center;right:1362.50px;-webkit-text-stroke:0.1px #111;">2,5*6326/10000</div>
<div class="t" style="top:735.30px;font-size:9.68px;line-height:12px;color:#111;transform:scaleX(0.9091);transform-origin:left center;left:861.00px;-webkit-text-stroke:0.1px #111;">Длина посадочных полос</div>
<div class="t" style="top:747.10px;font-size:9.68px;line-height:12px;color:#111;transform:scaleX(0.9091);transform-origin:left center;left:861.00px;-webkit-text-stroke:0.1px #111;">2,5 км на 1 га площади</div>
<div class="t" style="top:775.00px;font-size:9.68px;line-height:12px;color:#111;transform:scaleX(0.9091);transform-origin:center center;left:-51.00px;width:200px;text-align:center;-webkit-text-stroke:0.1px #111;">6</div>
<div class="t" style="top:775.00px;font-size:9.68px;line-height:12px;color:#111;transform:scaleX(0.9091);transform-origin:left center;left:74.00px;-webkit-text-stroke:0.1px #111;">Копка ям вручную размером: 0,3х0,3 м (средние</div>
<div class="t" style="top:786.80px;font-size:9.68px;line-height:12px;color:#111;transform:scaleX(0.9091);transform-origin:left center;left:74.00px;-webkit-text-stroke:0.1px #111;">почвы)</div>
<div class="t" style="top:775.00px;font-size:9.68px;line-height:12px;color:#111;transform:scaleX(0.9091);transform-origin:center center;left:230.50px;width:200px;text-align:center;-webkit-text-stroke:0.1px #111;">шт</div>
<div class="t" style="top:775.00px;font-size:9.68px;line-height:12px;color:#111;transform:scaleX(0.9091);transform-origin:right center;right:1504.50px;-webkit-text-stroke:0.1px #111;">2303</div>
<div class="t" style="top:775.00px;font-size:9.68px;line-height:12px;color:#111;transform:scaleX(0.9091);transform-origin:right center;right:1362.50px;-webkit-text-stroke:0.1px #111;">20% от 0,6326</div>
<div class="t" style="top:786.80px;font-size:9.68px;line-height:12px;color:#111;transform:scaleX(0.9091);transform-origin:right center;right:1362.50px;-webkit-text-stroke:0.1px #111;">80% от 0,6326</div>
<div class="t" style="top:798.60px;font-size:9.68px;line-height:12px;color:#111;transform:scaleX(0.9091);transform-origin:right center;right:1362.50px;-webkit-text-stroke:0.1px #111;">2200*(20% от 0,6326)</div>
<div class="t" style="top:810.40px;font-size:9.68px;line-height:12px;color:#111;transform:scaleX(0.9091);transform-origin:right center;right:1362.50px;-webkit-text-stroke:0.1px #111;">4000*(80% от 0,6326)</div>
<div class="t" style="top:775.00px;font-size:9.68px;line-height:12px;color:#111;transform:scaleX(0.9091);transform-origin:left center;left:562.00px;-webkit-text-stroke:0.1px #111;">200-007.1-ППО.ГЧ</div>
<div class="t" style="top:775.00px;font-size:9.68px;line-height:12px;color:#111;transform:scaleX(0.9091);transform-origin:left center;left:695.00px;-webkit-text-stroke:0.1px #111;">Раздел ПД№2.pdf</div>
<div class="t" style="top:775.00px;font-size:9.68px;line-height:12px;color:#111;transform:scaleX(0.9091);transform-origin:left center;left:806.00px;-webkit-text-stroke:0.1px #111;">5</div>
<div class="t" style="top:787.00px;font-size:9.68px;line-height:12px;color:#111;transform:scaleX(0.9091);transform-origin:left center;left:562.00px;-webkit-text-stroke:0.1px #111;">Расчет лесовосстановления</div>
<div class="t" style="top:787.00px;font-size:9.68px;line-height:12px;color:#111;transform:scaleX(0.9091);transform-origin:left center;left:695.00px;-webkit-text-stroke:0.1px #111;">Расчет</div>
<div class="t" style="top:798.80px;font-size:9.68px;line-height:12px;color:#111;transform:scaleX(0.9091);transform-origin:left center;left:695.00px;-webkit-text-stroke:0.1px #111;">лесовосстановления.xlsx</div>
<div class="t" style="top:787.00px;font-size:9.68px;line-height:12px;color:#111;transform:scaleX(0.9091);transform-origin:left center;left:806.00px;-webkit-text-stroke:0.1px #111;">1</div>
<div class="t" style="top:775.00px;font-size:9.68px;line-height:12px;color:#111;transform:scaleX(0.9091);transform-origin:left center;left:861.00px;-webkit-text-stroke:0.1px #111;">п.4, Приложение 1 к Приказу</div>
<div class="t" style="top:786.80px;font-size:9.68px;line-height:12px;color:#111;transform:scaleX(0.9091);transform-origin:left center;left:861.00px;-webkit-text-stroke:0.1px #111;">Минприроды России от 29.12.2021</div>
<div class="t" style="top:798.60px;font-size:9.68px;line-height:12px;color:#111;transform:scaleX(0.9091);transform-origin:left center;left:861.00px;-webkit-text-stroke:0.1px #111;">№1024</div>
<div class="t" style="top:821.90px;font-size:9.68px;line-height:12px;color:#111;transform:scaleX(0.9091);transform-origin:center center;left:-51.00px;width:200px;text-align:center;-webkit-text-stroke:0.1px #111;">7</div>
<div class="t" style="top:821.90px;font-size:9.68px;line-height:12px;color:#111;transform:scaleX(0.9091);transform-origin:left center;left:74.00px;-webkit-text-stroke:0.1px #111;">Посадка вручную сеянцев сосны обыкновенной,</div>
<div class="t" style="top:833.70px;font-size:9.68px;line-height:12px;color:#111;transform:scaleX(0.9091);transform-origin:left center;left:74.00px;-webkit-text-stroke:0.1px #111;">высота 0,10-0,15 м</div>
<div class="t" style="top:821.90px;font-size:9.68px;line-height:12px;color:#111;transform:scaleX(0.9091);transform-origin:center center;left:230.50px;width:200px;text-align:center;-webkit-text-stroke:0.1px #111;">шт</div>
<div class="t" style="top:821.90px;font-size:9.68px;line-height:12px;color:#111;transform:scaleX(0.9091);transform-origin:right center;right:1504.50px;-webkit-text-stroke:0.1px #111;">1200</div>
<div class="t" style="top:821.90px;font-size:9.68px;line-height:12px;color:#111;transform:scaleX(0.9091);transform-origin:right center;right:1362.50px;-webkit-text-stroke:0.1px #111;">1200</div>
<div class="t" style="top:821.90px;font-size:9.68px;line-height:12px;color:#111;transform:scaleX(0.9091);transform-origin:left center;left:562.00px;-webkit-text-stroke:0.1px #111;">200-007.1-ППО.ГЧ</div>
<div class="t" style="top:821.90px;font-size:9.68px;line-height:12px;color:#111;transform:scaleX(0.9091);transform-origin:left center;left:695.00px;-webkit-text-stroke:0.1px #111;">Раздел ПД№2.pdf</div>
<div class="t" style="top:821.90px;font-size:9.68px;line-height:12px;color:#111;transform:scaleX(0.9091);transform-origin:left center;left:806.00px;-webkit-text-stroke:0.1px #111;">5</div>
<div class="t" style="top:833.90px;font-size:9.68px;line-height:12px;color:#111;transform:scaleX(0.9091);transform-origin:left center;left:562.00px;-webkit-text-stroke:0.1px #111;">Расчет лесовосстановления</div>
<div class="t" style="top:833.90px;font-size:9.68px;line-height:12px;color:#111;transform:scaleX(0.9091);transform-origin:left center;left:695.00px;-webkit-text-stroke:0.1px #111;">Расчет</div>
<div class="t" style="top:845.70px;font-size:9.68px;line-height:12px;color:#111;transform:scaleX(0.9091);transform-origin:left center;left:695.00px;-webkit-text-stroke:0.1px #111;">лесовосстановления.xlsx</div>
<div class="t" style="top:833.90px;font-size:9.68px;line-height:12px;color:#111;transform:scaleX(0.9091);transform-origin:left center;left:806.00px;-webkit-text-stroke:0.1px #111;">1</div>
<div class="t" style="top:870.00px;font-size:9.68px;line-height:12px;color:#111;transform:scaleX(0.9091);transform-origin:center center;left:-51.00px;width:200px;text-align:center;-webkit-text-stroke:0.1px #111;">8</div>
<div class="t" style="top:870.00px;font-size:9.68px;line-height:12px;color:#111;transform:scaleX(0.9091);transform-origin:left center;left:74.00px;-webkit-text-stroke:0.1px #111;">Сеянцы сосны обыкновенной, высота 0,10-0,15 м</div>
<div class="t" style="top:870.00px;font-size:9.68px;line-height:12px;color:#111;transform:scaleX(0.9091);transform-origin:center center;left:230.50px;width:200px;text-align:center;-webkit-text-stroke:0.1px #111;">шт</div>
<div class="t" style="top:870.00px;font-size:9.68px;line-height:12px;color:#111;transform:scaleX(0.9091);transform-origin:right center;right:1504.50px;-webkit-text-stroke:0.1px #111;">1200</div>
<div class="t" style="top:870.00px;font-size:9.68px;line-height:12px;color:#111;transform:scaleX(0.9091);transform-origin:right center;right:1362.50px;-webkit-text-stroke:0.1px #111;">1200</div>
<div class="t" style="top:870.00px;font-size:9.68px;line-height:12px;color:#111;transform:scaleX(0.9091);transform-origin:left center;left:562.00px;-webkit-text-stroke:0.1px #111;">200-007.1-ППО.ГЧ</div>
<div class="t" style="top:870.00px;font-size:9.68px;line-height:12px;color:#111;transform:scaleX(0.9091);transform-origin:left center;left:695.00px;-webkit-text-stroke:0.1px #111;">Раздел ПД№2.pdf</div>
<div class="t" style="top:870.00px;font-size:9.68px;line-height:12px;color:#111;transform:scaleX(0.9091);transform-origin:left center;left:806.00px;-webkit-text-stroke:0.1px #111;">5</div>
<div class="t" style="top:881.90px;font-size:9.68px;line-height:12px;color:#111;transform:scaleX(0.9091);transform-origin:left center;left:562.00px;-webkit-text-stroke:0.1px #111;">Расчет лесовосстановления</div>
<div class="t" style="top:881.90px;font-size:9.68px;line-height:12px;color:#111;transform:scaleX(0.9091);transform-origin:left center;left:695.00px;-webkit-text-stroke:0.1px #111;">Расчет</div>
<div class="t" style="top:881.90px;font-size:9.68px;line-height:12px;color:#111;transform:scaleX(0.9091);transform-origin:left center;left:806.00px;-webkit-text-stroke:0.1px #111;">1</div>
<svg class="a" style="left:26.5px;top:604.4px;" width="7" height="6" viewBox="0 0 7 6"><path d="M0 0 H6 L0 5Z" fill="#14782a"/></svg>
<svg class="a" style="left:26.5px;top:663.6px;" width="7" height="6" viewBox="0 0 7 6"><path d="M0 0 H6 L0 5Z" fill="#14782a"/></svg>
<svg class="a" style="left:26.5px;top:675.4px;" width="7" height="6" viewBox="0 0 7 6"><path d="M0 0 H6 L0 5Z" fill="#14782a"/></svg>
<svg class="a" style="left:26.5px;top:723.3px;" width="7" height="6" viewBox="0 0 7 6"><path d="M0 0 H6 L0 5Z" fill="#14782a"/></svg>
<svg class="a" style="left:26.5px;top:734.7px;" width="7" height="6" viewBox="0 0 7 6"><path d="M0 0 H6 L0 5Z" fill="#14782a"/></svg>
<svg class="a" style="left:26.5px;top:774.4px;" width="7" height="6" viewBox="0 0 7 6"><path d="M0 0 H6 L0 5Z" fill="#14782a"/></svg>
<svg class="a" style="left:26.5px;top:821.3px;" width="7" height="6" viewBox="0 0 7 6"><path d="M0 0 H6 L0 5Z" fill="#14782a"/></svg>
<svg class="a" style="left:26.5px;top:869.4px;" width="7" height="6" viewBox="0 0 7 6"><path d="M0 0 H6 L0 5Z" fill="#14782a"/></svg>
<svg class="a" style="left:417.5px;top:663.6px;" width="7" height="6" viewBox="0 0 7 6"><path d="M0 0 H6 L0 5Z" fill="#14782a"/></svg>
<svg class="a" style="left:417.5px;top:821.3px;" width="7" height="6" viewBox="0 0 7 6"><path d="M0 0 H6 L0 5Z" fill="#14782a"/></svg>
<svg class="a" style="left:417.5px;top:869.4px;" width="7" height="6" viewBox="0 0 7 6"><path d="M0 0 H6 L0 5Z" fill="#14782a"/></svg>
<svg class="a" style="left:803.5px;top:774.4px;" width="7" height="6" viewBox="0 0 7 6"><path d="M0 0 H6 L0 5Z" fill="#14782a"/></svg>
<svg class="a" style="left:803.5px;top:786.4px;" width="7" height="6" viewBox="0 0 7 6"><path d="M0 0 H6 L0 5Z" fill="#14782a"/></svg>
<svg class="a" style="left:803.5px;top:821.3px;" width="7" height="6" viewBox="0 0 7 6"><path d="M0 0 H6 L0 5Z" fill="#14782a"/></svg>
<svg class="a" style="left:803.5px;top:833.3px;" width="7" height="6" viewBox="0 0 7 6"><path d="M0 0 H6 L0 5Z" fill="#14782a"/></svg>
<svg class="a" style="left:803.5px;top:869.4px;" width="7" height="6" viewBox="0 0 7 6"><path d="M0 0 H6 L0 5Z" fill="#14782a"/></svg>
<svg class="a" style="left:803.5px;top:881.3px;" width="7" height="6" viewBox="0 0 7 6"><path d="M0 0 H6 L0 5Z" fill="#14782a"/></svg>
<div class="a" style="left:1506.00px;top:273.00px;width:16.00px;height:622.30px;background:#e6e6e6;"></div>
<div class="a" style="left:1507.50px;top:275.00px;width:12.50px;height:11.50px;background:#ffffff;box-sizing:border-box;border:1px solid #b8b8b8;"></div>
<svg class="a" style="left:1509px;top:277px;" width="10" height="8" viewBox="0 0 10 8"><path d="M1.5 6 H8.5 L5 2.5Z" fill="#222"/></svg>
<div class="a" style="left:1507.50px;top:287.00px;width:12.50px;height:351.50px;background:#ffffff;box-sizing:border-box;border:1px solid #b0b0b0;"></div>
<div class="a" style="left:1507.50px;top:883.00px;width:12.50px;height:11.50px;background:#ffffff;box-sizing:border-box;border:1px solid #b8b8b8;"></div>
<svg class="a" style="left:1509px;top:885px;" width="10" height="8" viewBox="0 0 10 8"><path d="M1.5 2 H8.5 L5 5.5Z" fill="#222"/></svg>
<svg class="a" style="left:6px;top:450px;" width="9" height="14" viewBox="0 0 9 14"><path d="M0 1 H3.5 L7.5 5.5 V9 H4.5 V12.5 H0Z" fill="#000"/><path d="M0 2.3 H3 L6.3 6 V7.8 H3.3 V11.2 H0Z" fill="#fff"/></svg>
<div class="a" style="left:6.00px;top:895.30px;width:1516.00px;height:22.00px;background:#e6e6e6;"></div>
<div class="a" style="left:6.00px;top:895.30px;width:1516.00px;height:1.00px;background:#c6c6c6;"></div>
<svg class="a" style="left:25px;top:900px;" width="8" height="10" viewBox="0 0 8 10"><path d="M6 1.5 L2.5 5 L6 8.5" stroke="#b0b0b0" stroke-width="1.2" fill="none"/></svg>
<svg class="a" style="left:48px;top:900px;" width="8" height="10" viewBox="0 0 8 10"><path d="M2 1.5 L5.5 5 L2 8.5" stroke="#b0b0b0" stroke-width="1.2" fill="none"/></svg>
<div class="a" style="left:85.40px;top:895.30px;width:196.40px;height:20.00px;background:#ffffff;"></div>
<div class="a" style="left:85.40px;top:913.50px;width:196.40px;height:2.00px;background:#217346;"></div>
<div class="t" style="top:899.50px;font-size:10.0px;line-height:12px;color:#217346;font-weight:bold;left:94.30px;">Раздел ПД №9_ВОР_01-07-04 Лесов</div>
<svg class="a" style="left:307px;top:899px;" width="14" height="14" viewBox="0 0 14 14"><circle cx="7" cy="7" r="6" fill="none" stroke="#777" stroke-width="1.1"/><path d="M7 3.8 V10.2 M3.8 7 H10.2" stroke="#777" stroke-width="1.3"/></svg>
<div class="a" style="left:915.50px;top:902.00px;width:1.20px;height:1.20px;background:#aaa;"></div>
<div class="a" style="left:915.50px;top:905.50px;width:1.20px;height:1.20px;background:#aaa;"></div>
<div class="a" style="left:915.50px;top:909.00px;width:1.20px;height:1.20px;background:#aaa;"></div>
<div class="a" style="left:929.00px;top:900.00px;width:11.70px;height:12.00px;background:#ffffff;box-sizing:border-box;border:1px solid #b8b8b8;"></div>
<svg class="a" style="left:930px;top:901px;" width="10" height="10" viewBox="0 0 10 10"><path d="M6.5 2 V8 L2.5 5Z" fill="#222"/></svg>
<div class="a" style="left:941.00px;top:900.00px;width:522.00px;height:12.00px;background:#ffffff;box-sizing:border-box;border:1px solid #b0b0b0;"></div>
<div class="a" style="left:1493.00px;top:900.00px;width:12.00px;height:12.00px;background:#ffffff;box-sizing:border-box;border:1px solid #b8b8b8;"></div>
<svg class="a" style="left:1494px;top:901px;" width="10" height="10" viewBox="0 0 10 10"><path d="M3.5 2 V8 L7.5 5Z" fill="#222"/></svg>
<div class="a" style="left:6.00px;top:917.30px;width:1516.00px;height:16.70px;background:#f3f3f3;"></div>
<div class="a" style="left:6.00px;top:917.30px;width:1516.00px;height:1.00px;background:#d4d4d4;"></div>
<div class="t" style="top:920.00px;font-size:9.3px;line-height:12px;color:#444;left:15.00px;">Готово</div>
<svg class="a" style="left:58px;top:919px;" width="14" height="13" viewBox="0 0 14 13"><rect x="2" y="4" width="10" height="8" fill="none" stroke="#777" stroke-width="0.8"/><path d="M2 7 H12 M2 9.5 H12 M5 4 V12 M8.5 4 V12" stroke="#888" stroke-width="0.6"/><rect x="1" y="1" width="4" height="3" fill="#666"/></svg>
<svg class="a" style="left:83px;top:918px;" width="16" height="15" viewBox="0 0 16 15"><circle cx="7" cy="8" r="5" fill="none" stroke="#666" stroke-width="1" stroke-dasharray="2 1.3"/><path d="M9 9 L14 14 M14 9 L9 14" stroke="#444" stroke-width="1.1"/><path d="M7 5 V8 H9.5" stroke="#444" stroke-width="0.9" fill="none"/></svg>
<div class="t" style="top:920.00px;font-size:9.3px;line-height:12px;color:#333;left:99.50px;">Специальные возможности: проверьте рекомендации</div>
<div class="t" style="top:920.00px;font-size:9.3px;line-height:12px;color:#444;left:1205.00px;">Количество: 12</div>
<div class="a" style="left:1283.00px;top:918.00px;width:30.00px;height:16.00px;background:#d9d9d9;"></div>
<svg class="a" style="left:1291px;top:919px;" width="14" height="14" viewBox="0 0 14 14"><rect x="1.5" y="2" width="11" height="10" fill="none" stroke="#666" stroke-width="0.9"/><path d="M1.5 5.3 H12.5 M1.5 8.6 H12.5 M5.2 2 V12 M8.9 2 V12" stroke="#666" stroke-width="0.7"/></svg>
<svg class="a" style="left:1323px;top:919px;" width="14" height="14" viewBox="0 0 14 14"><rect x="2" y="2" width="10" height="10" fill="none" stroke="#666" stroke-width="0.9"/><rect x="4.5" y="4.5" width="5" height="5" fill="none" stroke="#666" stroke-width="0.8"/></svg>
<svg class="a" style="left:1354px;top:919px;" width="14" height="14" viewBox="0 0 14 14"><rect x="2" y="2" width="10" height="10" fill="none" stroke="#666" stroke-width="0.9"/><path d="M5 2 V8 H9 V2" stroke="#666" stroke-width="0.8" fill="none"/></svg>
<div class="a" style="left:1381.00px;top:925.00px;width:7.00px;height:1.00px;background:#555;"></div>
<div class="a" style="left:1393.00px;top:925.00px;width:78.00px;height:1.00px;background:#888;"></div>
<div class="a" style="left:1430.00px;top:920.00px;width:4.00px;height:11.00px;background:#555;"></div>
<div class="a" style="left:1474.00px;top:925.00px;width:8.00px;height:1.00px;background:#555;"></div>
<div class="a" style="left:1477.50px;top:921.50px;width:1.00px;height:8.00px;background:#555;"></div>
<div class="t" style="top:920.00px;font-size:9.3px;line-height:12px;color:#444;left:1492.00px;">100 %</div>
<div class="a" style="left:6.00px;top:934.00px;width:1516.00px;height:32.00px;background:#212123;"></div>
<svg class="a" style="left:16px;top:942px;" width="17" height="17" viewBox="0 0 17 17"><path d="M0 2.3 L6.8 1.4 V7.9 H0Z M7.7 1.3 L16.5 0 V7.9 H7.7Z M0 8.8 H6.8 V15.3 L0 14.4Z M7.7 8.8 H16.5 V16.6 L7.7 15.4Z" fill="#f2f2f2"/></svg>
<svg class="a" style="left:53.0px;top:938.5px;" width="24" height="24" viewBox="0 0 24 24"><rect x="3" y="3" width="7" height="7" fill="#c0392b"/><rect x="10" y="6" width="7" height="7" fill="#d35400"/><rect x="6" y="11" width="8" height="8" fill="#e74c3c"/><path d="M3 14 L12 22 L22 16 L13 9Z" fill="#5b9bd5"/></svg>
<svg class="a" style="left:91.8px;top:938.5px;" width="24" height="24" viewBox="0 0 24 24"><path d="M2 5 H9 L11 7 H22 V20 H2Z" fill="#f0c043"/><rect x="5" y="11" width="14" height="7" fill="#4a90d9"/><rect x="2" y="7" width="20" height="3" fill="#e8a31b"/></svg>
<svg class="a" style="left:130.0px;top:938.5px;" width="24" height="24" viewBox="0 0 24 24"><rect x="9" y="4" width="13" height="16" rx="1" fill="#2f8fdd"/><rect x="2" y="7" width="12" height="11" rx="1" fill="#1264b8"/><circle cx="8" cy="12.5" r="3" fill="none" stroke="#fff" stroke-width="1.6"/></svg>
<svg class="a" style="left:169.0px;top:938.5px;" width="24" height="24" viewBox="0 0 24 24"><circle cx="12" cy="12" r="9.5" fill="url(#gch)"/><defs><linearGradient id="gch" x1="0" y1="0" x2="1" y2="1"><stop offset="0" stop-color="#4caf50"/><stop offset="0.5" stop-color="#f4b400"/><stop offset="1" stop-color="#e04a2f"/></linearGradient></defs></svg>
<svg class="a" style="left:207.5px;top:938.5px;" width="24" height="24" viewBox="0 0 24 24"><circle cx="12" cy="12" r="9.5" fill="#f5c518"/><circle cx="12" cy="12" r="7.5" fill="#f0a30a"/><text x="4.5" y="16" font-size="10" font-weight="bold" font-family="Liberation Sans" fill="#d32f2f">1С</text></svg>
<svg class="a" style="left:246.8px;top:938.5px;" width="24" height="24" viewBox="0 0 24 24"><circle cx="12" cy="12" r="9.5" fill="#3d5a98"/><path d="M7.5 6.5 L12 12 L16.5 6.5 M12 12 V18" stroke="#fff" stroke-width="2.6" fill="none"/></svg>
<svg class="a" style="left:284.0px;top:938.5px;" width="24" height="24" viewBox="0 0 24 24"><path d="M12 2 L21 7 V17 L12 22 L3 17 V7Z" fill="#2a6fb8"/><path d="M12 2 L21 7 L12 12 L3 7Z" fill="#8ec3ef"/><path d="M12 12 V22" stroke="#fff" stroke-width="1.3"/></svg>
<svg class="a" style="left:324.0px;top:938.5px;" width="24" height="24" viewBox="0 0 24 24"><circle cx="12" cy="12" r="9" fill="none" stroke="#bbb" stroke-width="1.6"/><path d="M12 4 L15 12 M20 12 L12 15 M6 17 L10 9" stroke="#bbb" stroke-width="1.4"/></svg>
<svg class="a" style="left:363.0px;top:938.5px;" width="24" height="24" viewBox="0 0 24 24"><circle cx="11" cy="11" r="9" fill="#1e8fdc"/><text x="6" y="16" font-size="13" font-weight="bold" font-family="Liberation Sans" fill="#fff">S</text><circle cx="17.5" cy="18" r="5" fill="#333" stroke="#999" stroke-width="0.8"/><text x="15.5" y="21.5" font-size="8" font-family="Liberation Sans" fill="#fff">1</text></svg>
<svg class="a" style="left:401.0px;top:938.5px;" width="24" height="24" viewBox="0 0 24 24"><circle cx="12" cy="12" r="9.5" fill="#25c443"/><circle cx="12" cy="12" r="7" fill="#1f1f1f"/><path d="M9 8 C8 10 10.5 14.5 15 16 L16 14 L14 13 L13 14 C11.5 13.5 10.5 12 10 11 L11 10 L10 8Z" fill="#25c443"/></svg>
<svg class="a" style="left:440.0px;top:938.5px;" width="24" height="24" viewBox="0 0 24 24"><circle cx="12" cy="12" r="9.5" fill="#2ea6e0"/><path d="M6 12 L17 7.5 L15 17 L11.5 14.5 L10 16 L10 13 L15 9 L9 12.5Z" fill="#fff"/></svg>
<svg class="a" style="left:478.0px;top:938.5px;" width="24" height="24" viewBox="0 0 24 24"><path d="M7 3 L17 1 V21 L7 23Z" fill="#4a78c2"/><path d="M9 5 H15 M9 9 H15 M9 13 H15" stroke="#cfe0f5" stroke-width="1.5"/></svg>
<svg class="a" style="left:517.7px;top:938.5px;" width="24" height="24" viewBox="0 0 24 24"><rect x="2" y="7" width="20" height="13" rx="2" fill="#777"/><rect x="4" y="5" width="5" height="3" fill="#777"/><circle cx="12" cy="13.5" r="4.5" fill="#a78bfa" stroke="#ddd" stroke-width="1.3"/></svg>
<svg class="a" style="left:556.0px;top:938.5px;" width="24" height="24" viewBox="0 0 24 24"><rect x="5" y="2" width="14" height="20" fill="#7b8794"/><rect x="6" y="3" width="12" height="4" fill="#4fc3f7"/><g fill="#e0e0e0"><rect x="6.5" y="9" width="3" height="2.5"/><rect x="10.5" y="9" width="3" height="2.5"/><rect x="6.5" y="13" width="3" height="2.5"/><rect x="10.5" y="13" width="3" height="2.5"/><rect x="6.5" y="17" width="3" height="2.5"/><rect x="10.5" y="17" width="3" height="2.5"/></g><rect x="14.5" y="9" width="3" height="10.5" fill="#1565c0"/></svg>
<svg class="a" style="left:595.0px;top:938.5px;" width="24" height="24" viewBox="0 0 24 24"><rect x="3" y="5" width="17" height="8" fill="#9ec7e8"/><rect x="2" y="12" width="18" height="5" fill="#ccc"/><path d="M10 13 H15 L16 15 H22 V22 H10Z" fill="#f2b43c"/></svg>
<svg class="a" style="left:633.0px;top:938.5px;" width="24" height="24" viewBox="0 0 24 24"><path d="M8 4 L16 2 V20 L8 22Z" fill="#5a8fd4"/><rect x="6" y="14" width="8" height="6" fill="#f2d54a"/></svg>
<svg class="a" style="left:672.0px;top:938.5px;" width="24" height="24" viewBox="0 0 24 24"><circle cx="12" cy="12" r="10" fill="#0b5cff"/><text x="4.3" y="15" font-size="8.5" font-weight="bold" font-family="Liberation Sans" fill="#fff">zm</text></svg>
<svg class="a" style="left:710.6px;top:938.5px;" width="24" height="24" viewBox="0 0 24 24"><path d="M5 4 H18 L20 20 H7Z" fill="#b8d4e8"/><path d="M5 4 L7 20 L4 17Z" fill="#6fa3c7"/><path d="M8 4 V2 M12 4 V2 M16 4 V2" stroke="#555" stroke-width="1"/></svg>
<div class="a" style="left:743.00px;top:934.00px;width:38.00px;height:32.00px;background:#545254;"></div>
<svg class="a" style="left:749.7px;top:938.5px;" width="24" height="24" viewBox="0 0 24 24"><rect x="6" y="3" width="16" height="18" rx="1" fill="#1d9a59"/><path d="M14 3 H22 V9 H14Z" fill="#33c481"/><path d="M14 15 H22 V21 H14Z" fill="#107c41"/><rect x="2" y="7" width="11" height="11" rx="1" fill="#107c41"/><path d="M4.5 9.5 L10.5 15.5 M10.5 9.5 L4.5 15.5" stroke="#fff" stroke-width="1.6"/></svg>
<div class="a" style="left:49.50px;top:964.00px;width:31.00px;height:2.00px;background:#76b9ed;"></div>
<div class="a" style="left:88.30px;top:964.00px;width:31.00px;height:2.00px;background:#76b9ed;"></div>
<div class="a" style="left:243.30px;top:964.00px;width:31.00px;height:2.00px;background:#76b9ed;"></div>
<div class="a" style="left:668.50px;top:964.00px;width:31.00px;height:2.00px;background:#76b9ed;"></div>
<div class="a" style="left:707.10px;top:964.00px;width:31.00px;height:2.00px;background:#76b9ed;"></div>
<div class="a" style="left:743.00px;top:964.00px;width:38.00px;height:2.00px;background:#76b9ed;"></div>
<div class="t" style="top:936.60px;font-size:9.4px;line-height:12px;color:#ececec;left:1465.50px;width:60px;text-align:center;">11:53</div>
<div class="t" style="top:950.70px;font-size:9.6px;line-height:12px;color:#ececec;transform:scaleX(0.88);transform-origin:right center;right:403.00px;">14.03.2025</div>
</body></html>
